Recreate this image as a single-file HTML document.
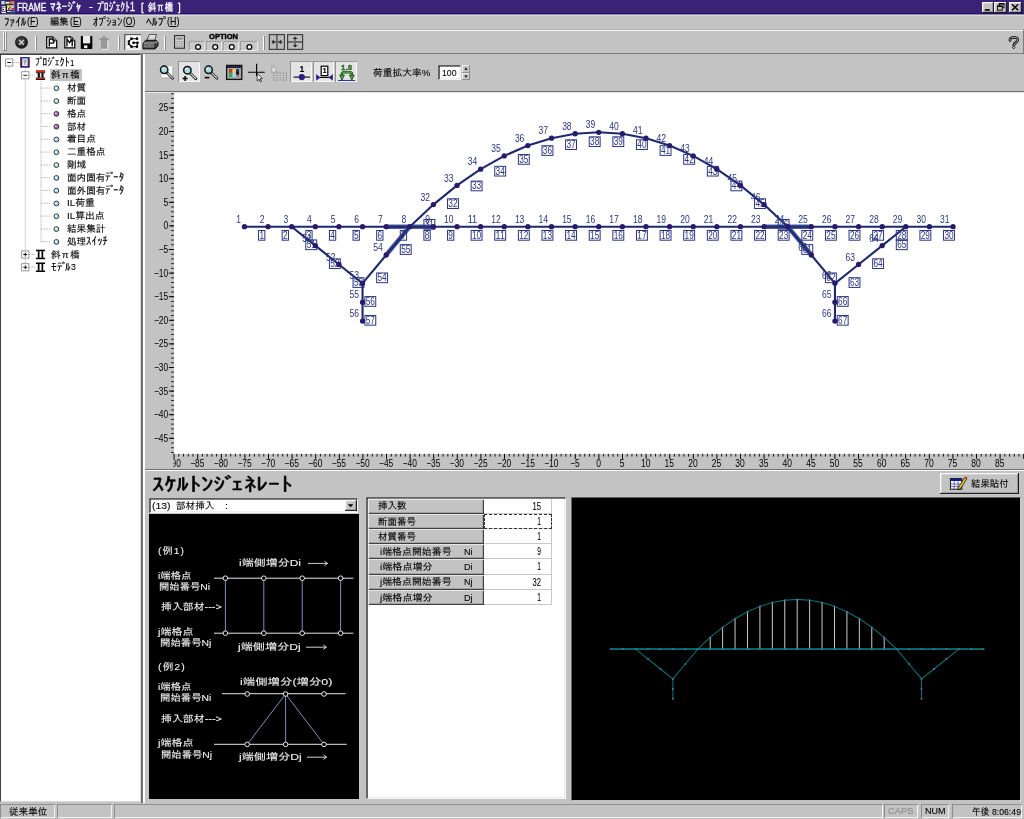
<!DOCTYPE html>
<html lang="ja"><head><meta charset="utf-8"><title>FRAME ﾏﾈｰｼﾞｬ - ﾌﾟﾛｼﾞｪｸﾄ1 [ 斜π橋 ]</title>
<style>
html,body{margin:0;padding:0;}
body{width:1024px;height:819px;overflow:hidden;background:#c3c3c3;position:relative;font-family:"Liberation Sans","IPAGothic","Noto Sans CJK JP",sans-serif;}
#app{will-change:transform;position:absolute;left:0;top:0;width:1024px;height:819px;overflow:hidden;background:#c3c3c3;}
#app div,#app svg,#app span.t{position:absolute;}
#app div{box-sizing:border-box;}
.t{white-space:nowrap;display:inline-block;-webkit-text-stroke:0.1px currentColor;}
svg text{font-family:"Liberation Sans","IPAGothic","Noto Sans CJK JP",sans-serif;}
u{text-decoration:underline;text-underline-offset:1px;}
</style></head><body><div id="app">

<!-- title bar -->
<div style="left:0.00px;top:0.00px;width:1024.00px;height:13.90px;background:#3a2376;"></div>
<div style="left:0.00px;top:12.80px;width:1024.00px;height:1.10px;background:#26126c;"></div>
<div style="left:0.00px;top:13.90px;width:1024.00px;height:1.10px;background:#8c8ca8;"></div>
<div style="left:0.00px;top:15.00px;width:1024.00px;height:1.00px;background:#dadada;"></div>
<svg style="left:0px;top:0px;" width="16" height="15" viewBox="0 0 16 15">
<rect x="1.6" y="1" width="12.6" height="12.2" fill="#f4f4f4"/><rect x="1.6" y="1" width="3" height="2.4" fill="#a8e4f0"/><rect x="5" y="1.4" width="5" height="2.6" fill="#fff" stroke="#000" stroke-width="0.7"/><rect x="10.2" y="1" width="3.4" height="4" fill="#d02828"/><rect x="11" y="1.6" width="1.4" height="1.2" fill="#f0e020"/><rect x="12" y="3.2" width="1.4" height="1.2" fill="#f0e020"/><rect x="1.6" y="4.4" width="12.4" height="0.9" fill="#000"/><rect x="2" y="5.6" width="4" height="5.6" fill="#fff" stroke="#000" stroke-width="0.7"/><rect x="3" y="6.8" width="1" height="1" fill="#2030c0"/><rect x="4.6" y="6.8" width="1" height="1" fill="#2030c0"/><rect x="3" y="9" width="1" height="1" fill="#000"/><rect x="7" y="6" width="3" height="2" fill="#f0e020"/><rect x="9" y="6.4" width="2.4" height="1.6" fill="#30a838"/><rect x="11.4" y="6" width="2.6" height="2" fill="#c8c8c8"/><rect x="8" y="8" width="6" height="1.8" fill="#d02828"/><rect x="10" y="8.4" width="1.6" height="1" fill="#fff"/><rect x="6.4" y="10" width="7.6" height="1.4" fill="#2030c0"/><rect x="7.4" y="11.2" width="5" height="1" fill="#fff"/><rect x="6" y="12.2" width="8" height="1" fill="#000"/><rect x="10.6" y="11" width="2.6" height="1.4" fill="#108070"/><rect x="6" y="5.4" width="0.9" height="7.4" fill="#000"/>
</svg>
<span class="t" id="t0" style="left:16.60px;top:0.70px;font-size:10.8px;line-height:13.39px;color:#fff;font-weight:normal;transform:scaleX(0.7752);transform-origin:0 50%;-webkit-text-stroke:0.3px #fff;">FRAME</span>
<span class="t" id="t1" style="left:49.80px;top:-0.34px;font-size:12px;line-height:14.88px;color:#fff;font-weight:normal;transform:scaleX(0.9554);transform-origin:0 50%;-webkit-text-stroke:0.3px #fff;">ﾏﾈｰｼ<span style="margin-left:-0.08em;margin-right:-0.2em">ﾞ</span>ｬ</span>
<span class="t" id="t2" style="left:88.90px;top:-0.40px;font-size:10.8px;line-height:13.39px;color:#fff;font-weight:normal;transform:scaleX(1.0805);transform-origin:0 50%;-webkit-text-stroke:0.3px #fff;">-</span>
<span class="t" id="t3" style="left:96.70px;top:-0.34px;font-size:12px;line-height:14.88px;color:#fff;font-weight:normal;transform:scaleX(0.7938);transform-origin:0 50%;-webkit-text-stroke:0.3px #fff;">ﾌ<span style="margin-left:-0.08em;margin-right:-0.2em">ﾟ</span>ﾛｼ<span style="margin-left:-0.08em;margin-right:-0.2em">ﾞ</span>ｪｸﾄ1</span>
<span class="t" id="t4" style="left:141.00px;top:0.70px;font-size:10.8px;line-height:13.39px;color:#fff;font-weight:normal;transform:scaleX(0.8667);transform-origin:0 50%;-webkit-text-stroke:0.3px #fff;">[</span>
<span class="t" id="t5" style="left:147.90px;top:0.70px;font-size:10.8px;line-height:13.39px;color:#fff;font-weight:normal;transform:scaleX(0.7718);transform-origin:0 50%;-webkit-text-stroke:0.3px #fff;">斜<span style="display:inline-block;width:1em;text-align:center">π</span>橋</span>
<span class="t" id="t6" style="left:178.00px;top:0.70px;font-size:10.8px;line-height:13.39px;color:#fff;font-weight:normal;transform:scaleX(0.9000);transform-origin:0 50%;-webkit-text-stroke:0.3px #fff;">]</span>
<div style="left:981.60px;top:1.80px;width:12.80px;height:11.20px;background:#c3c3c3;box-shadow:inset -0.8px -0.8px 0 #000,inset 0.8px 0.8px 0 #fff,inset -1.6px -1.6px 0 #808080,inset 1.6px 1.6px 0 #dfdfdf;"></div>
<div style="left:994.40px;top:1.80px;width:12.80px;height:11.20px;background:#c3c3c3;box-shadow:inset -0.8px -0.8px 0 #000,inset 0.8px 0.8px 0 #fff,inset -1.6px -1.6px 0 #808080,inset 1.6px 1.6px 0 #dfdfdf;"></div>
<div style="left:1008.80px;top:1.80px;width:12.80px;height:11.20px;background:#c3c3c3;box-shadow:inset -0.8px -0.8px 0 #000,inset 0.8px 0.8px 0 #fff,inset -1.6px -1.6px 0 #808080,inset 1.6px 1.6px 0 #dfdfdf;"></div>
<svg style="left:980px;top:0px;" width="44" height="15" viewBox="980 0 44 15">
<rect x="984.8" y="9.2" width="5" height="1.6" fill="#000"/>
<rect x="999.2" y="3.6" width="4.8" height="4.2" fill="none" stroke="#000" stroke-width="0.9"/><rect x="998.8" y="3.2" width="5.6" height="1.3" fill="#000"/><rect x="997.4" y="6" width="4.8" height="4.2" fill="#c3c3c3" stroke="#000" stroke-width="0.9"/><rect x="997" y="5.6" width="5.6" height="1.3" fill="#000"/>
<path d="M1012 4.2 L1018.2 10.2 M1018.2 4.2 L1012 10.2" stroke="#000" stroke-width="1.5" fill="none"/>
</svg>
<!-- menu bar -->
<span class="t" id="t7" style="left:4.20px;top:14.81px;font-size:11.6px;line-height:14.38px;color:#000;font-weight:normal;transform:scaleX(0.9660);transform-origin:0 50%;">ﾌｧｲﾙ</span>
<span class="t" id="t8" style="left:27.10px;top:15.85px;font-size:10.4px;line-height:12.90px;color:#000;font-weight:normal;transform:scaleX(0.8724);transform-origin:0 50%;">(<u>F</u>)</span>
<span class="t" id="t9" style="left:50.20px;top:16.35px;font-size:9.6px;line-height:11.90px;color:#000;font-weight:normal;transform:scaleX(0.9590);transform-origin:0 50%;">編集</span>
<span class="t" id="t10" style="left:69.60px;top:15.85px;font-size:10.4px;line-height:12.90px;color:#000;font-weight:normal;transform:scaleX(0.8360);transform-origin:0 50%;">(<u>E</u>)</span>
<span class="t" id="t11" style="left:92.90px;top:14.81px;font-size:11.6px;line-height:14.38px;color:#000;font-weight:normal;transform:scaleX(0.9319);transform-origin:0 50%;">ｵﾌ<span style="margin-left:-0.08em;margin-right:-0.2em">ﾟ</span>ｼｮﾝ</span>
<span class="t" id="t12" style="left:122.60px;top:15.85px;font-size:10.4px;line-height:12.90px;color:#000;font-weight:normal;transform:scaleX(0.8249);transform-origin:0 50%;">(<u>O</u>)</span>
<span class="t" id="t13" style="left:146.20px;top:14.81px;font-size:11.6px;line-height:14.38px;color:#000;font-weight:normal;transform:scaleX(1.0124);transform-origin:0 50%;">ﾍﾙﾌ<span style="margin-left:-0.08em;margin-right:-0.2em">ﾟ</span></span>
<span class="t" id="t14" style="left:166.60px;top:15.85px;font-size:10.4px;line-height:12.90px;color:#000;font-weight:normal;transform:scaleX(0.8579);transform-origin:0 50%;">(<u>H</u>)</span>
<!-- toolbar -->
<div style="left:0.00px;top:29.00px;width:1024.00px;height:0.80px;background:#b0b0b0;"></div>
<div style="left:0.00px;top:29.80px;width:1024.00px;height:1.10px;background:#f4f4f4;"></div>
<div style="left:0.00px;top:52.80px;width:1023.40px;height:1.00px;background:#7c7c7c;"></div>
<div style="left:1022.50px;top:30.00px;width:1.00px;height:23.60px;background:#7c7c7c;"></div>
<div style="left:2.60px;top:32.40px;width:2.20px;height:19.00px;box-shadow:inset -0.8px -0.8px 0 #808080,inset 0.8px 0.8px 0 #fff;"></div>
<div style="left:5.20px;top:32.40px;width:2.20px;height:19.00px;box-shadow:inset -0.8px -0.8px 0 #808080,inset 0.8px 0.8px 0 #fff;"></div>
<div style="left:35.20px;top:36.00px;width:1.00px;height:14.40px;background:#fff;"></div>
<div style="left:36.20px;top:36.00px;width:1.00px;height:14.40px;background:#8a8a8a;"></div>
<div style="left:118.20px;top:36.00px;width:1.00px;height:14.40px;background:#fff;"></div>
<div style="left:119.20px;top:36.00px;width:1.00px;height:14.40px;background:#8a8a8a;"></div>
<div style="left:164.40px;top:36.00px;width:1.00px;height:14.40px;background:#fff;"></div>
<div style="left:165.40px;top:36.00px;width:1.00px;height:14.40px;background:#8a8a8a;"></div>
<div style="left:262.80px;top:36.00px;width:1.00px;height:14.40px;background:#fff;"></div>
<div style="left:263.80px;top:36.00px;width:1.00px;height:14.40px;background:#8a8a8a;"></div>
<div style="left:124.20px;top:33.60px;width:16.80px;height:16.30px;background:#d8d8d8;box-shadow:inset 1.2px 1.2px 0 #606060,inset -0.8px -0.8px 0 #fff;"></div>
<div style="left:1000.00px;top:33.00px;width:20.00px;height:19.00px;"></div>
<svg style="left:0px;top:31px;" width="1024" height="22" viewBox="0 31 1024 22">
<circle cx="21.5" cy="42.3" r="6.4" fill="#1c1c1c"/><circle cx="21" cy="41.6" r="4.6" fill="#3c3c3c"/><path d="M19.2 40 L23.8 44.6 M23.8 40 L19.2 44.6" stroke="#d0d0d0" stroke-width="1.5"/>
<path d="M46.7 36.9 H52.7 L56.7 40.8 V47.9 H46.7 Z" fill="#fff" stroke="#000" stroke-width="1.2" stroke-linejoin="miter"/><path d="M52.7 36.9 V40.8 H56.7" fill="#fff" stroke="#000" stroke-width="0.8"/>
<path d="M49.300000000000004 46.6 V39 H52.1 Q54.1 39 54.1 41 Q54.1 43.2 52.1 43.2 H49.300000000000004" fill="none" stroke="#000" stroke-width="1.3"/>
<path d="M64.8 36.9 H70.8 L74.8 40.8 V47.9 H64.8 Z" fill="#fff" stroke="#000" stroke-width="1.2" stroke-linejoin="miter"/><path d="M70.8 36.9 V40.8 H74.8" fill="#fff" stroke="#000" stroke-width="0.8"/>
<path d="M67.0 46.6 V39 L69.60000000000001 42.6 L72.2 39 V46.6" fill="none" stroke="#000" stroke-width="1.3"/>
<rect x="80.8" y="36" width="11.5" height="12.9" fill="#000"/><rect x="83" y="36" width="7.2" height="7.4" fill="#ececec"/><rect x="83.4" y="44.8" width="6.4" height="4.1" fill="#000"/><rect x="84" y="45.4" width="3.4" height="2.8" fill="#f0f0f0"/>
<path d="M101.2 39.4 H107 V48.6 H101.2 Z" fill="#8c8c8c"/><path d="M99.6 39 H108.6" stroke="#8c8c8c" stroke-width="1.6"/><path d="M102.4 37 H105.8" stroke="#8c8c8c" stroke-width="1.4"/><path d="M102.6 40.6 V47.6 M104.1 40.6 V47.6 M105.6 40.6 V47.6" stroke="#c4c4c4" stroke-width="0.7" stroke-dasharray="1 0.8"/><path d="M108 40.4 V49.4 H102" stroke="#f4f4f4" stroke-width="0.8" fill="none"/>
<rect x="126.6" y="35.4" width="13.8" height="13" fill="#fff"/><path d="M137 38.7 H131.5 L128.8 41.4 V44 L131.5 46.7 H137 L137.5 42.8 H133.6" stroke="#000" stroke-width="1.1" fill="none"/><g fill="#000"><circle cx="131.5" cy="38.7" r="1.35"/><circle cx="137" cy="38.7" r="1.35"/><circle cx="128.8" cy="41.4" r="1.2"/><circle cx="128.8" cy="44" r="1.2"/><circle cx="133.6" cy="42.8" r="1.35"/><circle cx="137.5" cy="42.8" r="1.35"/><circle cx="131.5" cy="46.7" r="1.35"/><circle cx="137" cy="46.7" r="1.35"/></g>
<path d="M146.6 40.6 L149.4 34.6 H156.4 L154.6 40.6 Z" fill="#f8f8f8" stroke="#222" stroke-width="0.8"/><path d="M148.8 37 H154.6 M148.2 38.6 H154" stroke="#9a9a9a" stroke-width="0.6"/><path d="M143 43 L146 40.2 H155.8 L158 41.8 V45.8 L155 48.9 H143 Z" fill="#4a4a4a" stroke="#000" stroke-width="0.9"/><path d="M143.4 43 H155 L157.8 41.6" fill="none" stroke="#d8d8d8" stroke-width="0.8"/><path d="M143.6 45 H154.8 M143.6 46.8 H154.8" stroke="#a8a8a8" stroke-width="0.8"/><path d="M155 43 V48.8" stroke="#000" stroke-width="0.8"/>
<rect x="174.6" y="35.6" width="9.8" height="12.6" fill="#d4d4d4" stroke="#282828" stroke-width="1.1"/><rect x="176.4" y="37.6" width="6.2" height="2" fill="#8c8c8c"/><g fill="#909090"><rect x="176.4" y="41" width="1.5" height="1.3"/><rect x="178.8" y="41" width="1.5" height="1.3"/><rect x="181.1" y="41" width="1.5" height="1.3"/><rect x="176.4" y="43.2" width="1.5" height="1.3"/><rect x="178.8" y="43.2" width="1.5" height="1.3"/><rect x="181.1" y="43.2" width="1.5" height="1.3"/><rect x="176.4" y="45.4" width="1.5" height="1.3"/><rect x="178.8" y="45.4" width="1.5" height="1.3"/><rect x="181.1" y="45.4" width="1.5" height="1.3"/></g>
<rect x="189.20" y="41.4" width="15.6" height="9" fill="#c9c9c9"/><path d="M189.20 50.4 V41.4 H204.80" fill="none" stroke="#6c6c6c" stroke-width="0.9" stroke-dasharray="0.9 0.7"/><path d="M204.80 41.4 V50.4 H189.20" fill="none" stroke="#f0f0f0" stroke-width="0.9"/><circle cx="198.10" cy="47" r="2.4" fill="#fff" stroke="#000" stroke-width="1.25"/>
<rect x="206.40" y="41.4" width="15.2" height="9" fill="#c9c9c9"/><path d="M206.40 50.4 V41.4 H221.60" fill="none" stroke="#6c6c6c" stroke-width="0.9" stroke-dasharray="0.9 0.7"/><path d="M221.60 41.4 V50.4 H206.40" fill="none" stroke="#f0f0f0" stroke-width="0.9"/><circle cx="215.20" cy="47" r="2.4" fill="#fff" stroke="#000" stroke-width="1.25"/>
<rect x="223.20" y="41.4" width="15.4" height="9" fill="#c9c9c9"/><path d="M223.20 50.4 V41.4 H238.60" fill="none" stroke="#6c6c6c" stroke-width="0.9" stroke-dasharray="0.9 0.7"/><path d="M238.60 41.4 V50.4 H223.20" fill="none" stroke="#f0f0f0" stroke-width="0.9"/><circle cx="231.80" cy="47" r="2.4" fill="#fff" stroke="#000" stroke-width="1.25"/>
<rect x="240.40" y="41.4" width="17.2" height="9" fill="#c9c9c9"/><path d="M240.40 50.4 V41.4 H257.60" fill="none" stroke="#6c6c6c" stroke-width="0.9" stroke-dasharray="0.9 0.7"/><path d="M257.60 41.4 V50.4 H240.40" fill="none" stroke="#f0f0f0" stroke-width="0.9"/><circle cx="249.40" cy="47" r="2.4" fill="#fff" stroke="#000" stroke-width="1.25"/>
<rect x="269.4" y="34.6" width="15" height="14.8" fill="#bcbcbc" stroke="#404040" stroke-width="1.2"/>
<path d="M276.9 34.8 V49.2" stroke="#404040" stroke-width="1.3"/><path d="M275.7 42 H272.29999999999995 M278.09999999999997 42 H281.5" stroke="#303030" stroke-width="1.3"/><path d="M271.29999999999995 42 L273.9 39.4 V44.6 Z M282.5 42 L279.9 39.4 V44.6 Z" fill="#303030"/>
<rect x="287.6" y="34.6" width="15" height="14.8" fill="#bcbcbc" stroke="#404040" stroke-width="1.2"/>
<path d="M288.0 42 H302.20000000000005" stroke="#404040" stroke-width="1.3"/><path d="M295.1 40.8 V37.4 M295.1 43.2 V46.6" stroke="#303030" stroke-width="1.3"/><path d="M295.1 36.4 L292.5 39 H297.70000000000005 Z M295.1 47.6 L292.5 45 H297.70000000000005 Z" fill="#303030"/>
<path d="M1010 40.4 C1009.8 36.6 1017.8 36.2 1017.8 39.8 C1017.8 42 1014.2 42.6 1013.7 45.2" fill="none" stroke="#111" stroke-width="2.7" stroke-linecap="round"/><path d="M1010 40.4 C1009.8 36.6 1017.8 36.2 1017.8 39.8 C1017.8 42 1014.2 42.6 1013.7 45.2" fill="none" stroke="#d0d0d0" stroke-width="0.9" stroke-linecap="round"/><path d="M1013.7 46 L1015 47.4 L1013.7 48.9 L1012.4 47.4 Z" fill="#d0d0d0" stroke="#111" stroke-width="0.9"/>
</svg>
<span class="t" id="t15" style="left:208.70px;top:32.26px;font-size:7.8px;line-height:9.67px;color:#000;font-weight:bold;transform:scaleX(0.9702);transform-origin:0 50%;-webkit-text-stroke:0.45px #000;">OPTION</span>
<!-- tree -->
<div style="left:0.00px;top:54.40px;width:141.00px;height:747.60px;background:#fff;border-left:1.6px solid #404040;border-top:1.6px solid #404040;border-right:1.6px solid #d8d8d8;border-bottom:1.2px solid #d8d8d8;"></div>
<div style="left:141.20px;top:54.00px;width:1.60px;height:749.00px;background:#707070;"></div>
<div style="left:143.00px;top:54.00px;width:2.20px;height:749.00px;background:#fff;"></div>
<svg style="left:0px;top:56px;" width="140" height="230" viewBox="0 56 140 230">
<path d="M13 62.5 H20" stroke="#909090" stroke-width="0.8" stroke-dasharray="0.8 0.8"/>
<path d="M9.2 66.5 V69.5" stroke="#909090" stroke-width="0.8" stroke-dasharray="0.8 0.8"/>
<path d="M25.3 68.5 V267.3" stroke="#909090" stroke-width="0.8" stroke-dasharray="0.8 0.8"/>
<path d="M29 75.3 H35" stroke="#909090" stroke-width="0.8" stroke-dasharray="0.8 0.8"/>
<path d="M41 81.3 V241.70000000000002" stroke="#909090" stroke-width="0.8" stroke-dasharray="0.8 0.8"/>
<path d="M41 88.1 H50.5" stroke="#909090" stroke-width="0.8" stroke-dasharray="0.8 0.8"/>
<path d="M41 100.9 H50.5" stroke="#909090" stroke-width="0.8" stroke-dasharray="0.8 0.8"/>
<path d="M41 113.7 H50.5" stroke="#909090" stroke-width="0.8" stroke-dasharray="0.8 0.8"/>
<path d="M41 126.5 H50.5" stroke="#909090" stroke-width="0.8" stroke-dasharray="0.8 0.8"/>
<path d="M41 139.3 H50.5" stroke="#909090" stroke-width="0.8" stroke-dasharray="0.8 0.8"/>
<path d="M41 152.10000000000002 H50.5" stroke="#909090" stroke-width="0.8" stroke-dasharray="0.8 0.8"/>
<path d="M41 164.9 H50.5" stroke="#909090" stroke-width="0.8" stroke-dasharray="0.8 0.8"/>
<path d="M41 177.7 H50.5" stroke="#909090" stroke-width="0.8" stroke-dasharray="0.8 0.8"/>
<path d="M41 190.5 H50.5" stroke="#909090" stroke-width="0.8" stroke-dasharray="0.8 0.8"/>
<path d="M41 203.3 H50.5" stroke="#909090" stroke-width="0.8" stroke-dasharray="0.8 0.8"/>
<path d="M41 216.10000000000002 H50.5" stroke="#909090" stroke-width="0.8" stroke-dasharray="0.8 0.8"/>
<path d="M41 228.9 H50.5" stroke="#909090" stroke-width="0.8" stroke-dasharray="0.8 0.8"/>
<path d="M41 241.70000000000002 H50.5" stroke="#909090" stroke-width="0.8" stroke-dasharray="0.8 0.8"/>
<path d="M29 254.5 H35" stroke="#909090" stroke-width="0.8" stroke-dasharray="0.8 0.8"/>
<path d="M29 267.3 H35" stroke="#909090" stroke-width="0.8" stroke-dasharray="0.8 0.8"/>
<rect x="5.6" y="58.9" width="7.2" height="7.2" fill="#fff" stroke="#808080" stroke-width="0.8"/><path d="M7.199999999999999 62.5 H11.2" stroke="#000" stroke-width="0.9"/>
<rect x="21.7" y="71.7" width="7.2" height="7.2" fill="#fff" stroke="#808080" stroke-width="0.8"/><path d="M23.3 75.3 H27.3" stroke="#000" stroke-width="0.9"/>
<rect x="21.7" y="250.9" width="7.2" height="7.2" fill="#fff" stroke="#808080" stroke-width="0.8"/><path d="M23.3 254.5 H27.3" stroke="#000" stroke-width="0.9"/>
<path d="M25.3 252.5 V256.5" stroke="#000" stroke-width="0.9"/>
<rect x="21.7" y="263.7" width="7.2" height="7.2" fill="#fff" stroke="#808080" stroke-width="0.8"/><path d="M23.3 267.3 H27.3" stroke="#000" stroke-width="0.9"/>
<path d="M25.3 265.3 V269.3" stroke="#000" stroke-width="0.9"/>
<rect x="20.2" y="57.1" width="9.5" height="10.6" fill="#18187c"/><path d="M20.9 57.8 V67.0 M29 57.8 V67.0" stroke="#d03020" stroke-width="1.1" stroke-dasharray="1.2 1"/><rect x="22.2" y="58.5" width="5.5" height="7.6" fill="#ececec"/><rect x="22.2" y="58.5" width="5.5" height="1.6" fill="#9ad8e8"/><path d="M23.4 61.0 H26.6 M25 61.0 V64.8" stroke="#707070" stroke-width="0.9"/>
<rect x="35.9" y="70.1" width="9.2" height="2.4" fill="#c83020"/><rect x="35.9" y="72.39999999999999" width="9.2" height="0.8" fill="#000"/><rect x="35.9" y="77.3" width="9.2" height="1.9" fill="#c83020"/><rect x="35.9" y="79.1" width="9.2" height="0.9" fill="#000"/><rect x="37.7" y="72.89999999999999" width="2.2" height="4.8" fill="#000"/><rect x="41.3" y="72.89999999999999" width="2.2" height="4.8" fill="#000"/><rect x="39.9" y="73.2" width="1.4" height="4.1" fill="#e8d0c0"/>
<rect x="35.9" y="249.7" width="9.2" height="1.5" fill="#000"/><rect x="35.9" y="257.7" width="9.2" height="1.5" fill="#000"/><rect x="37.8" y="251.1" width="1.7" height="6.8" fill="#000"/><rect x="41.5" y="251.1" width="1.7" height="6.8" fill="#000"/>
<rect x="35.9" y="262.5" width="9.2" height="1.5" fill="#000"/><rect x="35.9" y="270.5" width="9.2" height="1.5" fill="#000"/><rect x="37.8" y="263.90000000000003" width="1.7" height="6.8" fill="#000"/><rect x="41.5" y="263.90000000000003" width="1.7" height="6.8" fill="#000"/>
<circle cx="56.4" cy="88.3" r="2.4" fill="#b4e6ee" stroke="#303040" stroke-width="1"/><circle cx="55.7" cy="87.6" r="0.8" fill="#fff" opacity="0.9"/>
<circle cx="56.4" cy="101.10000000000001" r="2.4" fill="#b4e6ee" stroke="#303040" stroke-width="1"/><circle cx="55.7" cy="100.4" r="0.8" fill="#fff" opacity="0.9"/>
<circle cx="56.4" cy="113.9" r="2.4" fill="#a070a0" stroke="#303040" stroke-width="1"/><circle cx="55.7" cy="113.2" r="0.8" fill="#fff" opacity="0.9"/>
<circle cx="56.4" cy="126.7" r="2.4" fill="#a070a0" stroke="#303040" stroke-width="1"/><circle cx="55.7" cy="126.0" r="0.8" fill="#fff" opacity="0.9"/>
<circle cx="56.4" cy="139.5" r="2.4" fill="#b4e6ee" stroke="#303040" stroke-width="1"/><circle cx="55.7" cy="138.8" r="0.8" fill="#fff" opacity="0.9"/>
<circle cx="56.4" cy="152.3" r="2.4" fill="#b4e6ee" stroke="#303040" stroke-width="1"/><circle cx="55.7" cy="151.60000000000002" r="0.8" fill="#fff" opacity="0.9"/>
<circle cx="56.4" cy="165.1" r="2.4" fill="#b4e6ee" stroke="#303040" stroke-width="1"/><circle cx="55.7" cy="164.4" r="0.8" fill="#fff" opacity="0.9"/>
<circle cx="56.4" cy="177.89999999999998" r="2.4" fill="#b4e6ee" stroke="#303040" stroke-width="1"/><circle cx="55.7" cy="177.2" r="0.8" fill="#fff" opacity="0.9"/>
<circle cx="56.4" cy="190.7" r="2.4" fill="#b4e6ee" stroke="#303040" stroke-width="1"/><circle cx="55.7" cy="190.0" r="0.8" fill="#fff" opacity="0.9"/>
<circle cx="56.4" cy="203.5" r="2.4" fill="#b4e6ee" stroke="#303040" stroke-width="1"/><circle cx="55.7" cy="202.8" r="0.8" fill="#fff" opacity="0.9"/>
<circle cx="56.4" cy="216.3" r="2.4" fill="#b4e6ee" stroke="#303040" stroke-width="1"/><circle cx="55.7" cy="215.60000000000002" r="0.8" fill="#fff" opacity="0.9"/>
<circle cx="56.4" cy="229.1" r="2.4" fill="#b4e6ee" stroke="#303040" stroke-width="1"/><circle cx="55.7" cy="228.4" r="0.8" fill="#fff" opacity="0.9"/>
<circle cx="56.4" cy="241.9" r="2.4" fill="#b4e6ee" stroke="#303040" stroke-width="1"/><circle cx="55.7" cy="241.20000000000002" r="0.8" fill="#fff" opacity="0.9"/>
</svg>
<div style="left:49.90px;top:69.30px;width:31.90px;height:11.60px;background:#c3c3c3;"></div>
<span class="t" id="t16" style="left:35.30px;top:55.13px;font-size:11.4px;line-height:14.14px;color:#000;font-weight:normal;transform:scaleX(0.8815);transform-origin:0 50%;">ﾌ<span style="margin-left:-0.08em;margin-right:-0.2em">ﾟ</span>ﾛｼ<span style="margin-left:-0.08em;margin-right:-0.2em">ﾞ</span>ｪｸﾄ</span>
<span class="t" id="t17" style="left:70.00px;top:56.55px;font-size:9.6px;line-height:11.90px;color:#000;font-weight:normal;transform:scaleX(0.8234);transform-origin:0 50%;">1</span>
<span class="t" id="t18" style="left:51.20px;top:69.35px;font-size:9.6px;line-height:11.90px;color:#000;font-weight:normal;transform:scaleX(1.0007);transform-origin:0 50%;">斜<span style="display:inline-block;width:1em;text-align:center">π</span>橋</span>
<span class="t" id="t19" style="left:66.70px;top:82.15px;font-size:9.6px;line-height:11.90px;color:#000;font-weight:normal;transform:scaleX(1.0007);transform-origin:0 50%;">材質</span>
<span class="t" id="t20" style="left:66.70px;top:94.95px;font-size:9.6px;line-height:11.90px;color:#000;font-weight:normal;transform:scaleX(1.0007);transform-origin:0 50%;">断面</span>
<span class="t" id="t21" style="left:66.70px;top:107.75px;font-size:9.6px;line-height:11.90px;color:#000;font-weight:normal;transform:scaleX(1.0007);transform-origin:0 50%;">格点</span>
<span class="t" id="t22" style="left:66.70px;top:120.55px;font-size:9.6px;line-height:11.90px;color:#000;font-weight:normal;transform:scaleX(1.0007);transform-origin:0 50%;">部材</span>
<span class="t" id="t23" style="left:66.70px;top:133.35px;font-size:9.6px;line-height:11.90px;color:#000;font-weight:normal;transform:scaleX(1.0007);transform-origin:0 50%;">着目点</span>
<span class="t" id="t24" style="left:66.70px;top:146.15px;font-size:9.6px;line-height:11.90px;color:#000;font-weight:normal;transform:scaleX(1.0007);transform-origin:0 50%;">二重格点</span>
<span class="t" id="t25" style="left:66.70px;top:158.95px;font-size:9.6px;line-height:11.90px;color:#000;font-weight:normal;transform:scaleX(1.0007);transform-origin:0 50%;">剛域</span>
<span class="t" id="t26" style="left:66.70px;top:171.75px;font-size:9.6px;line-height:11.90px;color:#000;font-weight:normal;transform:scaleX(1.0007);transform-origin:0 50%;">面内固有</span>
<span class="t" id="t27" style="left:105.10px;top:170.33px;font-size:11.4px;line-height:14.14px;color:#000;font-weight:normal;transform:scaleX(0.9783);transform-origin:0 50%;">ﾃ<span style="margin-left:-0.08em;margin-right:-0.2em">ﾞ</span>ｰﾀ</span>
<span class="t" id="t28" style="left:66.70px;top:184.55px;font-size:9.6px;line-height:11.90px;color:#000;font-weight:normal;transform:scaleX(1.0007);transform-origin:0 50%;">面外固有</span>
<span class="t" id="t29" style="left:105.10px;top:183.13px;font-size:11.4px;line-height:14.14px;color:#000;font-weight:normal;transform:scaleX(0.9783);transform-origin:0 50%;">ﾃ<span style="margin-left:-0.08em;margin-right:-0.2em">ﾞ</span>ｰﾀ</span>
<span class="t" id="t30" style="left:66.70px;top:197.35px;font-size:9.6px;line-height:11.90px;color:#000;font-weight:normal;transform:scaleX(1.0293);transform-origin:0 50%;">IL荷重</span>
<span class="t" id="t31" style="left:66.70px;top:210.15px;font-size:9.6px;line-height:11.90px;color:#000;font-weight:normal;transform:scaleX(1.0218);transform-origin:0 50%;">IL算出点</span>
<span class="t" id="t32" style="left:66.70px;top:222.95px;font-size:9.6px;line-height:11.90px;color:#000;font-weight:normal;transform:scaleX(1.0007);transform-origin:0 50%;">結果集計</span>
<span class="t" id="t33" style="left:66.70px;top:235.75px;font-size:9.6px;line-height:11.90px;color:#000;font-weight:normal;transform:scaleX(1.0007);transform-origin:0 50%;">処理</span>
<span class="t" id="t34" style="left:85.90px;top:234.33px;font-size:11.4px;line-height:14.14px;color:#000;font-weight:normal;transform:scaleX(0.9569);transform-origin:0 50%;">ｽｲｯﾁ</span>
<span class="t" id="t35" style="left:51.20px;top:248.55px;font-size:9.6px;line-height:11.90px;color:#000;font-weight:normal;transform:scaleX(1.0007);transform-origin:0 50%;">斜<span style="display:inline-block;width:1em;text-align:center">π</span>橋</span>
<span class="t" id="t36" style="left:51.20px;top:259.93px;font-size:11.4px;line-height:14.14px;color:#000;font-weight:normal;transform:scaleX(0.9987);transform-origin:0 50%;">ﾓﾃ<span style="margin-left:-0.08em;margin-right:-0.2em">ﾞ</span>ﾙ</span>
<span class="t" id="t37" style="left:71.00px;top:261.35px;font-size:9.6px;line-height:11.90px;color:#000;font-weight:normal;transform:scaleX(0.8982);transform-origin:0 50%;">3</span>
<!-- chart panel -->
<div style="left:178.10px;top:61.20px;width:22.20px;height:21.00px;background:#e4e4e4;box-shadow:inset 0.8px 0.8px 0 #808080,inset -0.8px -0.8px 0 #fff;"></div>
<div style="left:290.30px;top:61.20px;width:21.90px;height:21.00px;background:#e4e4e4;box-shadow:inset 0.8px 0.8px 0 #808080,inset -0.8px -0.8px 0 #fff;"></div>
<div style="left:313.00px;top:61.20px;width:21.20px;height:21.00px;background:#e4e4e4;box-shadow:inset 0.8px 0.8px 0 #808080,inset -0.8px -0.8px 0 #fff;"></div>
<div style="left:335.00px;top:61.20px;width:22.30px;height:21.00px;background:#e4e4e4;box-shadow:inset 0.8px 0.8px 0 #808080,inset -0.8px -0.8px 0 #fff;"></div>
<div style="left:145.00px;top:91.00px;width:879.00px;height:1.00px;background:#707070;"></div>
<div style="left:145.00px;top:92.00px;width:879.00px;height:1.00px;background:#e8e8e8;"></div>
<div style="left:173.60px;top:92.80px;width:850.40px;height:361.00px;background:#fff;"></div>
<div style="left:145.00px;top:469.00px;width:879.00px;height:1.40px;background:#707070;"></div>
<div style="left:145.00px;top:470.40px;width:879.00px;height:1.00px;background:#fff;"></div>
<span class="t" id="t38" style="left:373.40px;top:66.65px;font-size:9.6px;line-height:11.90px;color:#000;font-weight:normal;transform:scaleX(1.0159);transform-origin:0 50%;">荷重拡大率%</span>
<div style="left:437.80px;top:64.80px;width:23.00px;height:15.60px;background:#fff;box-shadow:inset 0.8px 0.8px 0 #808080,inset -0.8px -0.8px 0 #fff,inset 1.6px 1.6px 0 #000,inset -1.6px -1.6px 0 #dfdfdf;"></div>
<span class="t" id="t39" style="left:441.60px;top:66.85px;font-size:9.6px;line-height:11.90px;color:#000;font-weight:normal;transform:scaleX(0.9116);transform-origin:0 50%;">100</span>
<div style="left:461.60px;top:65.00px;width:8.80px;height:7.60px;box-shadow:inset -0.8px -0.8px 0 #808080,inset 0.8px 0.8px 0 #fff;background:#c3c3c3;"></div>
<div style="left:461.60px;top:72.80px;width:8.80px;height:7.60px;box-shadow:inset -0.8px -0.8px 0 #808080,inset 0.8px 0.8px 0 #fff;background:#c3c3c3;"></div>
<svg style="left:145px;top:56px;" width="400" height="34" viewBox="145 56 400 34">
<rect x="161.8" y="66.4" width="10.8" height="11.2" fill="#fff"/><path d="M162.2 78 H172.8 V67" stroke="#a0a0a0" stroke-width="0.7" fill="none"/>
<path d="M167.0 72.8 L172.6 78.39999999999999" stroke="#181818" stroke-width="2.7" stroke-linecap="round"/><path d="M167.6 73.2 L172.39999999999998 78.1" stroke="#e8e8e8" stroke-width="1.1" stroke-linecap="round"/><circle cx="164.2" cy="69.8" r="3.7" fill="#a4dce2" stroke="#101010" stroke-width="1.5"/><path d="M162.2 69.39999999999999 A2.2 2.2 0 0 1 164.0 67.6" stroke="#f4ffff" stroke-width="0.9" fill="none"/>
<path d="M190.20000000000002 73.2 L195.8 78.8" stroke="#181818" stroke-width="2.7" stroke-linecap="round"/><path d="M190.8 73.60000000000001 L195.6 78.5" stroke="#e8e8e8" stroke-width="1.1" stroke-linecap="round"/><circle cx="187.4" cy="70.2" r="3.7" fill="#a4dce2" stroke="#101010" stroke-width="1.5"/><path d="M185.4 69.8 A2.2 2.2 0 0 1 187.20000000000002 68.0" stroke="#f4ffff" stroke-width="0.9" fill="none"/>
<path d="M182.6 78.4 H187.6 M185.1 75.9 V80.9" stroke="#000" stroke-width="1.5"/>
<path d="M211.4 72.8 L217.0 78.39999999999999" stroke="#181818" stroke-width="2.7" stroke-linecap="round"/><path d="M212.0 73.2 L216.79999999999998 78.1" stroke="#e8e8e8" stroke-width="1.1" stroke-linecap="round"/><circle cx="208.6" cy="69.8" r="3.7" fill="#a4dce2" stroke="#101010" stroke-width="1.5"/><path d="M206.6 69.39999999999999 A2.2 2.2 0 0 1 208.4 67.6" stroke="#f4ffff" stroke-width="0.9" fill="none"/>
<path d="M204.8 77.6 H209.4" stroke="#000" stroke-width="1.6"/>
<rect x="226.6" y="65.4" width="15.2" height="14" fill="#a8a8a8" stroke="#101010" stroke-width="1.3"/><rect x="227" y="66" width="14.4" height="2" fill="#181830"/><path d="M228 66.9 H241" stroke="#5060c0" stroke-width="0.7" stroke-dasharray="1 1"/><rect x="229" y="69" width="3.2" height="3.8" fill="#d03838"/><rect x="229" y="73.2" width="3.2" height="3.8" fill="#38a848"/><rect x="232.8" y="69" width="2.8" height="3.2" fill="#e8e030"/><rect x="232.8" y="72.2" width="2.8" height="4.8" fill="#a0dce4"/><rect x="236.2" y="69" width="2.8" height="2.2" fill="#2828a0"/><rect x="236.2" y="71.2" width="2.8" height="3.6" fill="#101010"/><rect x="237" y="75.4" width="1.6" height="1.4" fill="#d03838"/>
<path d="M248.2 72.2 H264.8 M256.6 63.8 V76" stroke="#000" stroke-width="1.1"/><path d="M257.2 73.4 V81 L259 79.2 L260.4 82 L261.4 81.4 L260 78.8 L262.2 78.6 Z" fill="#fff" stroke="#000" stroke-width="0.7"/>
<path d="M272 65.6 V73.4 L274 71.6 L275.4 74.2 L276.4 73.6 L275 71.2 L277.2 71 Z" fill="#e8e8e8" stroke="#909090" stroke-width="0.7"/><rect x="273.8" y="73" width="12.6" height="7" fill="#d4d4d4" stroke="#909090" stroke-width="0.7"/><path d="M273.8 75.4 H286.4 M273.8 77.8 H286.4 M277 73 V80 M280.2 73 V80 M283.4 73 V80" stroke="#909090" stroke-width="0.6"/>
<path d="M293.6 77.1 H310" stroke="#000" stroke-width="1.1"/><circle cx="301.8" cy="77.1" r="3.1" fill="#2a1a8c"/>
<path d="M316.4 77.4 H332.6" stroke="#000" stroke-width="1.1"/><path d="M316.2 74 L320.2 77.4 L316.2 80.8 Z M332.8 74 L328.8 77.4 L332.8 80.8 Z" fill="#2a1a9c"/><rect x="321.2" y="66.2" width="6.6" height="9.4" fill="#fff" stroke="#000" stroke-width="1.2"/>
<path d="M338 80.5 H355.2" stroke="#2838b0" stroke-width="1.1"/><path d="M342 72.4 H351.8 M342 72 V76 M351.8 72 V76" stroke="#143c10" stroke-width="2.2" fill="none"/><path d="M342 72.4 H351.8 M342 72 V76 M351.8 72 V76" stroke="#48b038" stroke-width="1" fill="none"/><path d="M339.6 75 H344.4 L342 80 Z M349.4 75 H354.2 L351.8 80 Z" fill="#48b038" stroke="#143c10" stroke-width="0.8"/>
<path d="M464.4 69.8 L466 67.6 L467.6 69.8 Z M464.4 75.6 L466 77.8 L467.6 75.6 Z" fill="#000"/>
</svg>
<div class="t" style="left:301.80px;margin-left:-100px;width:200px;text-align:center;top:63.97px;font-size:8.6px;line-height:10.66px;color:#000;font-weight:bold;font-family:"Liberation Serif",serif;-webkit-text-stroke:0.4px #000;"><span id="t40" style="display:inline-block;">1</span></div>
<div class="t" style="left:324.50px;margin-left:-100px;width:200px;text-align:center;top:66.09px;font-size:7.6px;line-height:9.42px;color:#000;font-weight:bold;font-family:"Liberation Serif",serif;-webkit-text-stroke:0.4px #000;"><span id="t41" style="display:inline-block;">1</span></div>
<div class="t" style="left:346.80px;margin-left:-100px;width:200px;text-align:center;top:63.94px;font-size:7.2px;line-height:8.93px;color:#48b038;font-weight:bold;-webkit-text-stroke:0.5px #1c4c14;letter-spacing:0.3px;"><span id="t42" style="display:inline-block;">1.0</span></div>
<svg style="left:145px;top:92px;" width="879" height="378" viewBox="145 92 879 378">
<clipPath id="cpx"><rect x="173.6" y="453" width="851" height="17"/></clipPath>
<path d="M171.2 452.46H173.8M171.2 447.74H173.8M171.2 443.02H173.8M171.2 438.30H173.8M171.2 433.58H173.8M171.2 428.86H173.8M171.2 424.14H173.8M171.2 419.42H173.8M171.2 414.70H173.8M171.2 409.98H173.8M171.2 405.26H173.8M171.2 400.54H173.8M171.2 395.82H173.8M171.2 391.10H173.8M171.2 386.38H173.8M171.2 381.66H173.8M171.2 376.94H173.8M171.2 372.22H173.8M171.2 367.50H173.8M171.2 362.78H173.8M171.2 358.06H173.8M171.2 353.34H173.8M171.2 348.62H173.8M171.2 343.90H173.8M171.2 339.18H173.8M171.2 334.46H173.8M171.2 329.74H173.8M171.2 325.02H173.8M171.2 320.30H173.8M171.2 315.58H173.8M171.2 310.86H173.8M171.2 306.14H173.8M171.2 301.42H173.8M171.2 296.70H173.8M171.2 291.98H173.8M171.2 287.26H173.8M171.2 282.54H173.8M171.2 277.82H173.8M171.2 273.10H173.8M171.2 268.38H173.8M171.2 263.66H173.8M171.2 258.94H173.8M171.2 254.22H173.8M171.2 249.50H173.8M171.2 244.78H173.8M171.2 240.06H173.8M171.2 235.34H173.8M171.2 230.62H173.8M171.2 225.90H173.8M171.2 221.18H173.8M171.2 216.46H173.8M171.2 211.74H173.8M171.2 207.02H173.8M171.2 202.30H173.8M171.2 197.58H173.8M171.2 192.86H173.8M171.2 188.14H173.8M171.2 183.42H173.8M171.2 178.70H173.8M171.2 173.98H173.8M171.2 169.26H173.8M171.2 164.54H173.8M171.2 159.82H173.8M171.2 155.10H173.8M171.2 150.38H173.8M171.2 145.66H173.8M171.2 140.94H173.8M171.2 136.22H173.8M171.2 131.50H173.8M171.2 126.78H173.8M171.2 122.06H173.8M171.2 117.34H173.8M171.2 112.62H173.8M171.2 107.90H173.8M171.2 103.18H173.8M171.2 98.46H173.8M171.2 93.74H173.8" stroke="#000" stroke-width="0.9"/>
<path d="M168.8 438.30H173.8M168.8 414.70H173.8M168.8 391.10H173.8M168.8 367.50H173.8M168.8 343.90H173.8M168.8 320.30H173.8M168.8 296.70H173.8M168.8 273.10H173.8M168.8 249.50H173.8M168.8 225.90H173.8M168.8 202.30H173.8M168.8 178.70H173.8M168.8 155.10H173.8M168.8 131.50H173.8M168.8 107.90H173.8" stroke="#000" stroke-width="1"/>
<text x="168.20" y="441.80" font-size="10.5" text-anchor="end" fill="#000" textLength="14.25" lengthAdjust="spacingAndGlyphs">−45</text>
<text x="168.20" y="418.20" font-size="10.5" text-anchor="end" fill="#000" textLength="14.25" lengthAdjust="spacingAndGlyphs">−40</text>
<text x="168.20" y="394.60" font-size="10.5" text-anchor="end" fill="#000" textLength="14.25" lengthAdjust="spacingAndGlyphs">−35</text>
<text x="168.20" y="371.00" font-size="10.5" text-anchor="end" fill="#000" textLength="14.25" lengthAdjust="spacingAndGlyphs">−30</text>
<text x="168.20" y="347.40" font-size="10.5" text-anchor="end" fill="#000" textLength="14.25" lengthAdjust="spacingAndGlyphs">−25</text>
<text x="168.20" y="323.80" font-size="10.5" text-anchor="end" fill="#000" textLength="14.25" lengthAdjust="spacingAndGlyphs">−20</text>
<text x="168.20" y="300.20" font-size="10.5" text-anchor="end" fill="#000" textLength="14.25" lengthAdjust="spacingAndGlyphs">−15</text>
<text x="168.20" y="276.60" font-size="10.5" text-anchor="end" fill="#000" textLength="14.25" lengthAdjust="spacingAndGlyphs">−10</text>
<text x="168.20" y="253.00" font-size="10.5" text-anchor="end" fill="#000" textLength="9.50" lengthAdjust="spacingAndGlyphs">−5</text>
<text x="168.20" y="229.40" font-size="10.5" text-anchor="end" fill="#000" textLength="4.75" lengthAdjust="spacingAndGlyphs">0</text>
<text x="168.20" y="205.80" font-size="10.5" text-anchor="end" fill="#000" textLength="4.75" lengthAdjust="spacingAndGlyphs">5</text>
<text x="168.20" y="182.20" font-size="10.5" text-anchor="end" fill="#000" textLength="9.50" lengthAdjust="spacingAndGlyphs">10</text>
<text x="168.20" y="158.60" font-size="10.5" text-anchor="end" fill="#000" textLength="9.50" lengthAdjust="spacingAndGlyphs">15</text>
<text x="168.20" y="135.00" font-size="10.5" text-anchor="end" fill="#000" textLength="9.50" lengthAdjust="spacingAndGlyphs">20</text>
<text x="168.20" y="111.40" font-size="10.5" text-anchor="end" fill="#000" textLength="9.50" lengthAdjust="spacingAndGlyphs">25</text>
<path d="M178.82 453.8V456.6M183.54 453.8V456.6M188.26 453.8V456.6M192.98 453.8V456.6M202.42 453.8V456.6M207.14 453.8V456.6M211.86 453.8V456.6M216.58 453.8V456.6M226.02 453.8V456.6M230.74 453.8V456.6M235.46 453.8V456.6M240.18 453.8V456.6M249.62 453.8V456.6M254.34 453.8V456.6M259.06 453.8V456.6M263.78 453.8V456.6M273.22 453.8V456.6M277.94 453.8V456.6M282.66 453.8V456.6M287.38 453.8V456.6M296.82 453.8V456.6M301.54 453.8V456.6M306.26 453.8V456.6M310.98 453.8V456.6M320.42 453.8V456.6M325.14 453.8V456.6M329.86 453.8V456.6M334.58 453.8V456.6M344.02 453.8V456.6M348.74 453.8V456.6M353.46 453.8V456.6M358.18 453.8V456.6M367.62 453.8V456.6M372.34 453.8V456.6M377.06 453.8V456.6M381.78 453.8V456.6M391.22 453.8V456.6M395.94 453.8V456.6M400.66 453.8V456.6M405.38 453.8V456.6M414.82 453.8V456.6M419.54 453.8V456.6M424.26 453.8V456.6M428.98 453.8V456.6M438.42 453.8V456.6M443.14 453.8V456.6M447.86 453.8V456.6M452.58 453.8V456.6M462.02 453.8V456.6M466.74 453.8V456.6M471.46 453.8V456.6M476.18 453.8V456.6M485.62 453.8V456.6M490.34 453.8V456.6M495.06 453.8V456.6M499.78 453.8V456.6M509.22 453.8V456.6M513.94 453.8V456.6M518.66 453.8V456.6M523.38 453.8V456.6M532.82 453.8V456.6M537.54 453.8V456.6M542.26 453.8V456.6M546.98 453.8V456.6M556.42 453.8V456.6M561.14 453.8V456.6M565.86 453.8V456.6M570.58 453.8V456.6M580.02 453.8V456.6M584.74 453.8V456.6M589.46 453.8V456.6M594.18 453.8V456.6M603.62 453.8V456.6M608.34 453.8V456.6M613.06 453.8V456.6M617.78 453.8V456.6M627.22 453.8V456.6M631.94 453.8V456.6M636.66 453.8V456.6M641.38 453.8V456.6M650.82 453.8V456.6M655.54 453.8V456.6M660.26 453.8V456.6M664.98 453.8V456.6M674.42 453.8V456.6M679.14 453.8V456.6M683.86 453.8V456.6M688.58 453.8V456.6M698.02 453.8V456.6M702.74 453.8V456.6M707.46 453.8V456.6M712.18 453.8V456.6M721.62 453.8V456.6M726.34 453.8V456.6M731.06 453.8V456.6M735.78 453.8V456.6M745.22 453.8V456.6M749.94 453.8V456.6M754.66 453.8V456.6M759.38 453.8V456.6M768.82 453.8V456.6M773.54 453.8V456.6M778.26 453.8V456.6M782.98 453.8V456.6M792.42 453.8V456.6M797.14 453.8V456.6M801.86 453.8V456.6M806.58 453.8V456.6M816.02 453.8V456.6M820.74 453.8V456.6M825.46 453.8V456.6M830.18 453.8V456.6M839.62 453.8V456.6M844.34 453.8V456.6M849.06 453.8V456.6M853.78 453.8V456.6M863.22 453.8V456.6M867.94 453.8V456.6M872.66 453.8V456.6M877.38 453.8V456.6M886.82 453.8V456.6M891.54 453.8V456.6M896.26 453.8V456.6M900.98 453.8V456.6M910.42 453.8V456.6M915.14 453.8V456.6M919.86 453.8V456.6M924.58 453.8V456.6M934.02 453.8V456.6M938.74 453.8V456.6M943.46 453.8V456.6M948.18 453.8V456.6M957.62 453.8V456.6M962.34 453.8V456.6M967.06 453.8V456.6M971.78 453.8V456.6M981.22 453.8V456.6M985.94 453.8V456.6M990.66 453.8V456.6M995.38 453.8V456.6M1004.82 453.8V456.6M1009.54 453.8V456.6M1014.26 453.8V456.6M1018.98 453.8V456.6" stroke="#000" stroke-width="0.9"/><path d="M174.10 453.8V458.8M197.70 453.8V458.8M221.30 453.8V458.8M244.90 453.8V458.8M268.50 453.8V458.8M292.10 453.8V458.8M315.70 453.8V458.8M339.30 453.8V458.8M362.90 453.8V458.8M386.50 453.8V458.8M410.10 453.8V458.8M433.70 453.8V458.8M457.30 453.8V458.8M480.90 453.8V458.8M504.50 453.8V458.8M528.10 453.8V458.8M551.70 453.8V458.8M575.30 453.8V458.8M598.90 453.8V458.8M622.50 453.8V458.8M646.10 453.8V458.8M669.70 453.8V458.8M693.30 453.8V458.8M716.90 453.8V458.8M740.50 453.8V458.8M764.10 453.8V458.8M787.70 453.8V458.8M811.30 453.8V458.8M834.90 453.8V458.8M858.50 453.8V458.8M882.10 453.8V458.8M905.70 453.8V458.8M929.30 453.8V458.8M952.90 453.8V458.8M976.50 453.8V458.8M1000.10 453.8V458.8M1023.70 453.8V458.8" stroke="#000" stroke-width="1"/>
<g clip-path="url(#cpx)">
<text x="173.70" y="467.10" font-size="10.5" text-anchor="middle" fill="#000" textLength="14.25" lengthAdjust="spacingAndGlyphs">−90</text>
<text x="197.30" y="467.10" font-size="10.5" text-anchor="middle" fill="#000" textLength="14.25" lengthAdjust="spacingAndGlyphs">−85</text>
<text x="220.90" y="467.10" font-size="10.5" text-anchor="middle" fill="#000" textLength="14.25" lengthAdjust="spacingAndGlyphs">−80</text>
<text x="244.50" y="467.10" font-size="10.5" text-anchor="middle" fill="#000" textLength="14.25" lengthAdjust="spacingAndGlyphs">−75</text>
<text x="268.10" y="467.10" font-size="10.5" text-anchor="middle" fill="#000" textLength="14.25" lengthAdjust="spacingAndGlyphs">−70</text>
<text x="291.70" y="467.10" font-size="10.5" text-anchor="middle" fill="#000" textLength="14.25" lengthAdjust="spacingAndGlyphs">−65</text>
<text x="315.30" y="467.10" font-size="10.5" text-anchor="middle" fill="#000" textLength="14.25" lengthAdjust="spacingAndGlyphs">−60</text>
<text x="338.90" y="467.10" font-size="10.5" text-anchor="middle" fill="#000" textLength="14.25" lengthAdjust="spacingAndGlyphs">−55</text>
<text x="362.50" y="467.10" font-size="10.5" text-anchor="middle" fill="#000" textLength="14.25" lengthAdjust="spacingAndGlyphs">−50</text>
<text x="386.10" y="467.10" font-size="10.5" text-anchor="middle" fill="#000" textLength="14.25" lengthAdjust="spacingAndGlyphs">−45</text>
<text x="409.70" y="467.10" font-size="10.5" text-anchor="middle" fill="#000" textLength="14.25" lengthAdjust="spacingAndGlyphs">−40</text>
<text x="433.30" y="467.10" font-size="10.5" text-anchor="middle" fill="#000" textLength="14.25" lengthAdjust="spacingAndGlyphs">−35</text>
<text x="456.90" y="467.10" font-size="10.5" text-anchor="middle" fill="#000" textLength="14.25" lengthAdjust="spacingAndGlyphs">−30</text>
<text x="480.50" y="467.10" font-size="10.5" text-anchor="middle" fill="#000" textLength="14.25" lengthAdjust="spacingAndGlyphs">−25</text>
<text x="504.10" y="467.10" font-size="10.5" text-anchor="middle" fill="#000" textLength="14.25" lengthAdjust="spacingAndGlyphs">−20</text>
<text x="527.70" y="467.10" font-size="10.5" text-anchor="middle" fill="#000" textLength="14.25" lengthAdjust="spacingAndGlyphs">−15</text>
<text x="551.30" y="467.10" font-size="10.5" text-anchor="middle" fill="#000" textLength="14.25" lengthAdjust="spacingAndGlyphs">−10</text>
<text x="574.90" y="467.10" font-size="10.5" text-anchor="middle" fill="#000" textLength="9.50" lengthAdjust="spacingAndGlyphs">−5</text>
<text x="598.50" y="467.10" font-size="10.5" text-anchor="middle" fill="#000" textLength="4.75" lengthAdjust="spacingAndGlyphs">0</text>
<text x="622.10" y="467.10" font-size="10.5" text-anchor="middle" fill="#000" textLength="4.75" lengthAdjust="spacingAndGlyphs">5</text>
<text x="645.70" y="467.10" font-size="10.5" text-anchor="middle" fill="#000" textLength="9.50" lengthAdjust="spacingAndGlyphs">10</text>
<text x="669.30" y="467.10" font-size="10.5" text-anchor="middle" fill="#000" textLength="9.50" lengthAdjust="spacingAndGlyphs">15</text>
<text x="692.90" y="467.10" font-size="10.5" text-anchor="middle" fill="#000" textLength="9.50" lengthAdjust="spacingAndGlyphs">20</text>
<text x="716.50" y="467.10" font-size="10.5" text-anchor="middle" fill="#000" textLength="9.50" lengthAdjust="spacingAndGlyphs">25</text>
<text x="740.10" y="467.10" font-size="10.5" text-anchor="middle" fill="#000" textLength="9.50" lengthAdjust="spacingAndGlyphs">30</text>
<text x="763.70" y="467.10" font-size="10.5" text-anchor="middle" fill="#000" textLength="9.50" lengthAdjust="spacingAndGlyphs">35</text>
<text x="787.30" y="467.10" font-size="10.5" text-anchor="middle" fill="#000" textLength="9.50" lengthAdjust="spacingAndGlyphs">40</text>
<text x="810.90" y="467.10" font-size="10.5" text-anchor="middle" fill="#000" textLength="9.50" lengthAdjust="spacingAndGlyphs">45</text>
<text x="834.50" y="467.10" font-size="10.5" text-anchor="middle" fill="#000" textLength="9.50" lengthAdjust="spacingAndGlyphs">50</text>
<text x="858.10" y="467.10" font-size="10.5" text-anchor="middle" fill="#000" textLength="9.50" lengthAdjust="spacingAndGlyphs">55</text>
<text x="881.70" y="467.10" font-size="10.5" text-anchor="middle" fill="#000" textLength="9.50" lengthAdjust="spacingAndGlyphs">60</text>
<text x="905.30" y="467.10" font-size="10.5" text-anchor="middle" fill="#000" textLength="9.50" lengthAdjust="spacingAndGlyphs">65</text>
<text x="928.90" y="467.10" font-size="10.5" text-anchor="middle" fill="#000" textLength="9.50" lengthAdjust="spacingAndGlyphs">70</text>
<text x="952.50" y="467.10" font-size="10.5" text-anchor="middle" fill="#000" textLength="9.50" lengthAdjust="spacingAndGlyphs">75</text>
<text x="976.10" y="467.10" font-size="10.5" text-anchor="middle" fill="#000" textLength="9.50" lengthAdjust="spacingAndGlyphs">80</text>
<text x="999.70" y="467.10" font-size="10.5" text-anchor="middle" fill="#000" textLength="9.50" lengthAdjust="spacingAndGlyphs">85</text>
</g>
<path d="M386.17 226.70L433.41 226.70M386.17 255.02L409.79 226.70M764.09 226.70L811.33 226.70M787.71 226.70L811.33 255.02" stroke="#4c5aa2" stroke-width="4.4" fill="none" stroke-linecap="butt"/>
<path d="M244.45 226.70L268.07 226.70M268.07 226.70L291.69 226.70M291.69 226.70L315.31 226.70M315.31 226.70L338.93 226.70M338.93 226.70L362.55 226.70M362.55 226.70L386.17 226.70M386.17 226.70L409.79 226.70M409.79 226.70L433.41 226.70M433.41 226.70L457.03 226.70M457.03 226.70L480.65 226.70M480.65 226.70L504.27 226.70M504.27 226.70L527.89 226.70M527.89 226.70L551.51 226.70M551.51 226.70L575.13 226.70M575.13 226.70L598.75 226.70M598.75 226.70L622.37 226.70M622.37 226.70L645.99 226.70M645.99 226.70L669.61 226.70M669.61 226.70L693.23 226.70M693.23 226.70L716.85 226.70M716.85 226.70L740.47 226.70M740.47 226.70L764.09 226.70M764.09 226.70L787.71 226.70M787.71 226.70L811.33 226.70M811.33 226.70L834.95 226.70M834.95 226.70L858.57 226.70M858.57 226.70L882.19 226.70M882.19 226.70L905.81 226.70M905.81 226.70L929.43 226.70M929.43 226.70L953.05 226.70M409.79 226.70L433.41 204.57M433.41 204.57L457.03 185.40M457.03 185.40L480.65 169.17M480.65 169.17L504.27 155.90M504.27 155.90L527.89 145.57M527.89 145.57L551.51 138.20M551.51 138.20L575.13 133.77M575.13 133.77L598.75 132.30M598.75 132.30L622.37 133.77M622.37 133.77L645.99 138.20M645.99 138.20L669.61 145.57M669.61 145.57L693.23 155.90M693.23 155.90L716.85 169.17M716.85 169.17L740.47 185.40M740.47 185.40L764.09 204.57M764.09 204.57L787.71 226.70M291.69 226.70L315.31 245.58M315.31 245.58L338.93 264.46M338.93 264.46L362.55 283.34M362.55 283.34L386.17 255.02M386.17 255.02L409.79 226.70M362.55 283.34L362.55 302.22M362.55 302.22L362.55 321.10M787.71 226.70L811.33 255.02M811.33 255.02L834.95 283.34M834.95 283.34L858.57 264.46M858.57 264.46L882.19 245.58M882.19 245.58L905.81 226.70M834.95 283.34L834.95 302.22M834.95 302.22L834.95 321.10" stroke="#1e2a6c" stroke-width="2.1" fill="none" stroke-linecap="round"/>
<rect x="258.56" y="230.50" width="6.3" height="9.7" fill="none" stroke="#2a3480" stroke-width="1"/><text x="261.71" y="238.70" font-size="10" text-anchor="middle" fill="#2a3480" textLength="4.60" lengthAdjust="spacingAndGlyphs">1</text>
<rect x="282.18" y="230.50" width="6.3" height="9.7" fill="none" stroke="#2a3480" stroke-width="1"/><text x="285.33" y="238.70" font-size="10" text-anchor="middle" fill="#2a3480" textLength="4.60" lengthAdjust="spacingAndGlyphs">2</text>
<rect x="305.80" y="230.50" width="6.3" height="9.7" fill="none" stroke="#2a3480" stroke-width="1"/><text x="308.95" y="238.70" font-size="10" text-anchor="middle" fill="#2a3480" textLength="4.60" lengthAdjust="spacingAndGlyphs">3</text>
<rect x="329.42" y="230.50" width="6.3" height="9.7" fill="none" stroke="#2a3480" stroke-width="1"/><text x="332.57" y="238.70" font-size="10" text-anchor="middle" fill="#2a3480" textLength="4.60" lengthAdjust="spacingAndGlyphs">4</text>
<rect x="353.04" y="230.50" width="6.3" height="9.7" fill="none" stroke="#2a3480" stroke-width="1"/><text x="356.19" y="238.70" font-size="10" text-anchor="middle" fill="#2a3480" textLength="4.60" lengthAdjust="spacingAndGlyphs">5</text>
<rect x="376.66" y="230.50" width="6.3" height="9.7" fill="none" stroke="#2a3480" stroke-width="1"/><text x="379.81" y="238.70" font-size="10" text-anchor="middle" fill="#2a3480" textLength="4.60" lengthAdjust="spacingAndGlyphs">6</text>
<rect x="400.28" y="230.50" width="6.3" height="9.7" fill="none" stroke="#2a3480" stroke-width="1"/><text x="403.43" y="238.70" font-size="10" text-anchor="middle" fill="#2a3480" textLength="4.60" lengthAdjust="spacingAndGlyphs">7</text>
<rect x="423.90" y="230.50" width="6.3" height="9.7" fill="none" stroke="#2a3480" stroke-width="1"/><text x="427.05" y="238.70" font-size="10" text-anchor="middle" fill="#2a3480" textLength="4.60" lengthAdjust="spacingAndGlyphs">8</text>
<rect x="447.52" y="230.50" width="6.3" height="9.7" fill="none" stroke="#2a3480" stroke-width="1"/><text x="450.67" y="238.70" font-size="10" text-anchor="middle" fill="#2a3480" textLength="4.60" lengthAdjust="spacingAndGlyphs">9</text>
<rect x="471.14" y="230.50" width="10.9" height="9.7" fill="none" stroke="#2a3480" stroke-width="1"/><text x="476.59" y="238.70" font-size="10" text-anchor="middle" fill="#2a3480" textLength="9.20" lengthAdjust="spacingAndGlyphs">10</text>
<rect x="494.76" y="230.50" width="10.9" height="9.7" fill="none" stroke="#2a3480" stroke-width="1"/><text x="500.21" y="238.70" font-size="10" text-anchor="middle" fill="#2a3480" textLength="9.20" lengthAdjust="spacingAndGlyphs">11</text>
<rect x="518.38" y="230.50" width="10.9" height="9.7" fill="none" stroke="#2a3480" stroke-width="1"/><text x="523.83" y="238.70" font-size="10" text-anchor="middle" fill="#2a3480" textLength="9.20" lengthAdjust="spacingAndGlyphs">12</text>
<rect x="542.00" y="230.50" width="10.9" height="9.7" fill="none" stroke="#2a3480" stroke-width="1"/><text x="547.45" y="238.70" font-size="10" text-anchor="middle" fill="#2a3480" textLength="9.20" lengthAdjust="spacingAndGlyphs">13</text>
<rect x="565.62" y="230.50" width="10.9" height="9.7" fill="none" stroke="#2a3480" stroke-width="1"/><text x="571.07" y="238.70" font-size="10" text-anchor="middle" fill="#2a3480" textLength="9.20" lengthAdjust="spacingAndGlyphs">14</text>
<rect x="589.24" y="230.50" width="10.9" height="9.7" fill="none" stroke="#2a3480" stroke-width="1"/><text x="594.69" y="238.70" font-size="10" text-anchor="middle" fill="#2a3480" textLength="9.20" lengthAdjust="spacingAndGlyphs">15</text>
<rect x="612.86" y="230.50" width="10.9" height="9.7" fill="none" stroke="#2a3480" stroke-width="1"/><text x="618.31" y="238.70" font-size="10" text-anchor="middle" fill="#2a3480" textLength="9.20" lengthAdjust="spacingAndGlyphs">16</text>
<rect x="636.48" y="230.50" width="10.9" height="9.7" fill="none" stroke="#2a3480" stroke-width="1"/><text x="641.93" y="238.70" font-size="10" text-anchor="middle" fill="#2a3480" textLength="9.20" lengthAdjust="spacingAndGlyphs">17</text>
<rect x="660.10" y="230.50" width="10.9" height="9.7" fill="none" stroke="#2a3480" stroke-width="1"/><text x="665.55" y="238.70" font-size="10" text-anchor="middle" fill="#2a3480" textLength="9.20" lengthAdjust="spacingAndGlyphs">18</text>
<rect x="683.72" y="230.50" width="10.9" height="9.7" fill="none" stroke="#2a3480" stroke-width="1"/><text x="689.17" y="238.70" font-size="10" text-anchor="middle" fill="#2a3480" textLength="9.20" lengthAdjust="spacingAndGlyphs">19</text>
<rect x="707.34" y="230.50" width="10.9" height="9.7" fill="none" stroke="#2a3480" stroke-width="1"/><text x="712.79" y="238.70" font-size="10" text-anchor="middle" fill="#2a3480" textLength="9.20" lengthAdjust="spacingAndGlyphs">20</text>
<rect x="730.96" y="230.50" width="10.9" height="9.7" fill="none" stroke="#2a3480" stroke-width="1"/><text x="736.41" y="238.70" font-size="10" text-anchor="middle" fill="#2a3480" textLength="9.20" lengthAdjust="spacingAndGlyphs">21</text>
<rect x="754.58" y="230.50" width="10.9" height="9.7" fill="none" stroke="#2a3480" stroke-width="1"/><text x="760.03" y="238.70" font-size="10" text-anchor="middle" fill="#2a3480" textLength="9.20" lengthAdjust="spacingAndGlyphs">22</text>
<rect x="778.20" y="230.50" width="10.9" height="9.7" fill="none" stroke="#2a3480" stroke-width="1"/><text x="783.65" y="238.70" font-size="10" text-anchor="middle" fill="#2a3480" textLength="9.20" lengthAdjust="spacingAndGlyphs">23</text>
<rect x="801.82" y="230.50" width="10.9" height="9.7" fill="none" stroke="#2a3480" stroke-width="1"/><text x="807.27" y="238.70" font-size="10" text-anchor="middle" fill="#2a3480" textLength="9.20" lengthAdjust="spacingAndGlyphs">24</text>
<rect x="825.44" y="230.50" width="10.9" height="9.7" fill="none" stroke="#2a3480" stroke-width="1"/><text x="830.89" y="238.70" font-size="10" text-anchor="middle" fill="#2a3480" textLength="9.20" lengthAdjust="spacingAndGlyphs">25</text>
<rect x="849.06" y="230.50" width="10.9" height="9.7" fill="none" stroke="#2a3480" stroke-width="1"/><text x="854.51" y="238.70" font-size="10" text-anchor="middle" fill="#2a3480" textLength="9.20" lengthAdjust="spacingAndGlyphs">26</text>
<rect x="872.68" y="230.50" width="10.9" height="9.7" fill="none" stroke="#2a3480" stroke-width="1"/><text x="878.13" y="238.70" font-size="10" text-anchor="middle" fill="#2a3480" textLength="9.20" lengthAdjust="spacingAndGlyphs">27</text>
<rect x="896.30" y="230.50" width="10.9" height="9.7" fill="none" stroke="#2a3480" stroke-width="1"/><text x="901.75" y="238.70" font-size="10" text-anchor="middle" fill="#2a3480" textLength="9.20" lengthAdjust="spacingAndGlyphs">28</text>
<rect x="919.92" y="230.50" width="10.9" height="9.7" fill="none" stroke="#2a3480" stroke-width="1"/><text x="925.37" y="238.70" font-size="10" text-anchor="middle" fill="#2a3480" textLength="9.20" lengthAdjust="spacingAndGlyphs">29</text>
<rect x="943.54" y="230.50" width="10.9" height="9.7" fill="none" stroke="#2a3480" stroke-width="1"/><text x="948.99" y="238.70" font-size="10" text-anchor="middle" fill="#2a3480" textLength="9.20" lengthAdjust="spacingAndGlyphs">30</text>
<rect x="423.90" y="219.44" width="10.9" height="9.7" fill="none" stroke="#2a3480" stroke-width="1"/><text x="429.35" y="227.64" font-size="10" text-anchor="middle" fill="#2a3480" textLength="9.20" lengthAdjust="spacingAndGlyphs">31</text>
<rect x="447.52" y="198.79" width="10.9" height="9.7" fill="none" stroke="#2a3480" stroke-width="1"/><text x="452.97" y="206.99" font-size="10" text-anchor="middle" fill="#2a3480" textLength="9.20" lengthAdjust="spacingAndGlyphs">32</text>
<rect x="471.14" y="181.09" width="10.9" height="9.7" fill="none" stroke="#2a3480" stroke-width="1"/><text x="476.59" y="189.29" font-size="10" text-anchor="middle" fill="#2a3480" textLength="9.20" lengthAdjust="spacingAndGlyphs">33</text>
<rect x="494.76" y="166.34" width="10.9" height="9.7" fill="none" stroke="#2a3480" stroke-width="1"/><text x="500.21" y="174.54" font-size="10" text-anchor="middle" fill="#2a3480" textLength="9.20" lengthAdjust="spacingAndGlyphs">34</text>
<rect x="518.38" y="154.54" width="10.9" height="9.7" fill="none" stroke="#2a3480" stroke-width="1"/><text x="523.83" y="162.74" font-size="10" text-anchor="middle" fill="#2a3480" textLength="9.20" lengthAdjust="spacingAndGlyphs">35</text>
<rect x="542.00" y="145.69" width="10.9" height="9.7" fill="none" stroke="#2a3480" stroke-width="1"/><text x="547.45" y="153.89" font-size="10" text-anchor="middle" fill="#2a3480" textLength="9.20" lengthAdjust="spacingAndGlyphs">36</text>
<rect x="565.62" y="139.79" width="10.9" height="9.7" fill="none" stroke="#2a3480" stroke-width="1"/><text x="571.07" y="147.99" font-size="10" text-anchor="middle" fill="#2a3480" textLength="9.20" lengthAdjust="spacingAndGlyphs">37</text>
<rect x="589.24" y="136.84" width="10.9" height="9.7" fill="none" stroke="#2a3480" stroke-width="1"/><text x="594.69" y="145.04" font-size="10" text-anchor="middle" fill="#2a3480" textLength="9.20" lengthAdjust="spacingAndGlyphs">38</text>
<rect x="612.86" y="136.84" width="10.9" height="9.7" fill="none" stroke="#2a3480" stroke-width="1"/><text x="618.31" y="145.04" font-size="10" text-anchor="middle" fill="#2a3480" textLength="9.20" lengthAdjust="spacingAndGlyphs">39</text>
<rect x="636.48" y="139.79" width="10.9" height="9.7" fill="none" stroke="#2a3480" stroke-width="1"/><text x="641.93" y="147.99" font-size="10" text-anchor="middle" fill="#2a3480" textLength="9.20" lengthAdjust="spacingAndGlyphs">40</text>
<rect x="660.10" y="145.69" width="10.9" height="9.7" fill="none" stroke="#2a3480" stroke-width="1"/><text x="665.55" y="153.89" font-size="10" text-anchor="middle" fill="#2a3480" textLength="9.20" lengthAdjust="spacingAndGlyphs">41</text>
<rect x="683.72" y="154.54" width="10.9" height="9.7" fill="none" stroke="#2a3480" stroke-width="1"/><text x="689.17" y="162.74" font-size="10" text-anchor="middle" fill="#2a3480" textLength="9.20" lengthAdjust="spacingAndGlyphs">42</text>
<rect x="707.34" y="166.34" width="10.9" height="9.7" fill="none" stroke="#2a3480" stroke-width="1"/><text x="712.79" y="174.54" font-size="10" text-anchor="middle" fill="#2a3480" textLength="9.20" lengthAdjust="spacingAndGlyphs">43</text>
<rect x="730.96" y="181.09" width="10.9" height="9.7" fill="none" stroke="#2a3480" stroke-width="1"/><text x="736.41" y="189.29" font-size="10" text-anchor="middle" fill="#2a3480" textLength="9.20" lengthAdjust="spacingAndGlyphs">44</text>
<rect x="754.58" y="198.79" width="10.9" height="9.7" fill="none" stroke="#2a3480" stroke-width="1"/><text x="760.03" y="206.99" font-size="10" text-anchor="middle" fill="#2a3480" textLength="9.20" lengthAdjust="spacingAndGlyphs">45</text>
<rect x="778.20" y="219.44" width="10.9" height="9.7" fill="none" stroke="#2a3480" stroke-width="1"/><text x="783.65" y="227.64" font-size="10" text-anchor="middle" fill="#2a3480" textLength="9.20" lengthAdjust="spacingAndGlyphs">46</text>
<rect x="305.80" y="239.94" width="10.9" height="9.7" fill="none" stroke="#2a3480" stroke-width="1"/><text x="311.25" y="248.14" font-size="10" text-anchor="middle" fill="#2a3480" textLength="9.20" lengthAdjust="spacingAndGlyphs">51</text>
<rect x="329.42" y="258.82" width="10.9" height="9.7" fill="none" stroke="#2a3480" stroke-width="1"/><text x="334.87" y="267.02" font-size="10" text-anchor="middle" fill="#2a3480" textLength="9.20" lengthAdjust="spacingAndGlyphs">52</text>
<rect x="353.04" y="277.70" width="10.9" height="9.7" fill="none" stroke="#2a3480" stroke-width="1"/><text x="358.49" y="285.90" font-size="10" text-anchor="middle" fill="#2a3480" textLength="9.20" lengthAdjust="spacingAndGlyphs">53</text>
<rect x="376.66" y="272.98" width="10.9" height="9.7" fill="none" stroke="#2a3480" stroke-width="1"/><text x="382.11" y="281.18" font-size="10" text-anchor="middle" fill="#2a3480" textLength="9.20" lengthAdjust="spacingAndGlyphs">54</text>
<rect x="400.28" y="244.66" width="10.9" height="9.7" fill="none" stroke="#2a3480" stroke-width="1"/><text x="405.73" y="252.86" font-size="10" text-anchor="middle" fill="#2a3480" textLength="9.20" lengthAdjust="spacingAndGlyphs">55</text>
<rect x="364.85" y="296.58" width="10.9" height="9.7" fill="none" stroke="#2a3480" stroke-width="1"/><text x="370.30" y="304.78" font-size="10" text-anchor="middle" fill="#2a3480" textLength="9.20" lengthAdjust="spacingAndGlyphs">56</text>
<rect x="364.85" y="315.46" width="10.9" height="9.7" fill="none" stroke="#2a3480" stroke-width="1"/><text x="370.30" y="323.66" font-size="10" text-anchor="middle" fill="#2a3480" textLength="9.20" lengthAdjust="spacingAndGlyphs">57</text>
<rect x="801.82" y="244.66" width="10.9" height="9.7" fill="none" stroke="#2a3480" stroke-width="1"/><text x="807.27" y="252.86" font-size="10" text-anchor="middle" fill="#2a3480" textLength="9.20" lengthAdjust="spacingAndGlyphs">61</text>
<rect x="825.44" y="272.98" width="10.9" height="9.7" fill="none" stroke="#2a3480" stroke-width="1"/><text x="830.89" y="281.18" font-size="10" text-anchor="middle" fill="#2a3480" textLength="9.20" lengthAdjust="spacingAndGlyphs">62</text>
<rect x="849.06" y="277.70" width="10.9" height="9.7" fill="none" stroke="#2a3480" stroke-width="1"/><text x="854.51" y="285.90" font-size="10" text-anchor="middle" fill="#2a3480" textLength="9.20" lengthAdjust="spacingAndGlyphs">63</text>
<rect x="872.68" y="258.82" width="10.9" height="9.7" fill="none" stroke="#2a3480" stroke-width="1"/><text x="878.13" y="267.02" font-size="10" text-anchor="middle" fill="#2a3480" textLength="9.20" lengthAdjust="spacingAndGlyphs">64</text>
<rect x="896.30" y="239.94" width="10.9" height="9.7" fill="none" stroke="#2a3480" stroke-width="1"/><text x="901.75" y="248.14" font-size="10" text-anchor="middle" fill="#2a3480" textLength="9.20" lengthAdjust="spacingAndGlyphs">65</text>
<rect x="837.25" y="296.58" width="10.9" height="9.7" fill="none" stroke="#2a3480" stroke-width="1"/><text x="842.70" y="304.78" font-size="10" text-anchor="middle" fill="#2a3480" textLength="9.20" lengthAdjust="spacingAndGlyphs">66</text>
<rect x="837.25" y="315.46" width="10.9" height="9.7" fill="none" stroke="#2a3480" stroke-width="1"/><text x="842.70" y="323.66" font-size="10" text-anchor="middle" fill="#2a3480" textLength="9.20" lengthAdjust="spacingAndGlyphs">67</text>
<circle cx="244.45" cy="226.70" r="2.65" fill="#2a1a6c"/>
<text x="240.95" y="222.80" font-size="10.5" text-anchor="end" fill="#2a3480" textLength="4.75" lengthAdjust="spacingAndGlyphs">1</text>
<circle cx="268.07" cy="226.70" r="2.65" fill="#2a1a6c"/>
<text x="264.57" y="222.80" font-size="10.5" text-anchor="end" fill="#2a3480" textLength="4.75" lengthAdjust="spacingAndGlyphs">2</text>
<circle cx="291.69" cy="226.70" r="2.65" fill="#2a1a6c"/>
<text x="288.19" y="222.80" font-size="10.5" text-anchor="end" fill="#2a3480" textLength="4.75" lengthAdjust="spacingAndGlyphs">3</text>
<circle cx="315.31" cy="226.70" r="2.65" fill="#2a1a6c"/>
<text x="311.81" y="222.80" font-size="10.5" text-anchor="end" fill="#2a3480" textLength="4.75" lengthAdjust="spacingAndGlyphs">4</text>
<circle cx="338.93" cy="226.70" r="2.65" fill="#2a1a6c"/>
<text x="335.43" y="222.80" font-size="10.5" text-anchor="end" fill="#2a3480" textLength="4.75" lengthAdjust="spacingAndGlyphs">5</text>
<circle cx="362.55" cy="226.70" r="2.65" fill="#2a1a6c"/>
<text x="359.05" y="222.80" font-size="10.5" text-anchor="end" fill="#2a3480" textLength="4.75" lengthAdjust="spacingAndGlyphs">6</text>
<circle cx="386.17" cy="226.70" r="2.65" fill="#2a1a6c"/>
<text x="382.67" y="222.80" font-size="10.5" text-anchor="end" fill="#2a3480" textLength="4.75" lengthAdjust="spacingAndGlyphs">7</text>
<circle cx="409.79" cy="226.70" r="2.65" fill="#2a1a6c"/>
<text x="406.29" y="222.80" font-size="10.5" text-anchor="end" fill="#2a3480" textLength="4.75" lengthAdjust="spacingAndGlyphs">8</text>
<circle cx="433.41" cy="226.70" r="2.65" fill="#2a1a6c"/>
<text x="429.91" y="222.80" font-size="10.5" text-anchor="end" fill="#2a3480" textLength="4.75" lengthAdjust="spacingAndGlyphs">9</text>
<circle cx="457.03" cy="226.70" r="2.65" fill="#2a1a6c"/>
<text x="453.53" y="222.80" font-size="10.5" text-anchor="end" fill="#2a3480" textLength="9.50" lengthAdjust="spacingAndGlyphs">10</text>
<circle cx="480.65" cy="226.70" r="2.65" fill="#2a1a6c"/>
<text x="477.15" y="222.80" font-size="10.5" text-anchor="end" fill="#2a3480" textLength="9.50" lengthAdjust="spacingAndGlyphs">11</text>
<circle cx="504.27" cy="226.70" r="2.65" fill="#2a1a6c"/>
<text x="500.77" y="222.80" font-size="10.5" text-anchor="end" fill="#2a3480" textLength="9.50" lengthAdjust="spacingAndGlyphs">12</text>
<circle cx="527.89" cy="226.70" r="2.65" fill="#2a1a6c"/>
<text x="524.39" y="222.80" font-size="10.5" text-anchor="end" fill="#2a3480" textLength="9.50" lengthAdjust="spacingAndGlyphs">13</text>
<circle cx="551.51" cy="226.70" r="2.65" fill="#2a1a6c"/>
<text x="548.01" y="222.80" font-size="10.5" text-anchor="end" fill="#2a3480" textLength="9.50" lengthAdjust="spacingAndGlyphs">14</text>
<circle cx="575.13" cy="226.70" r="2.65" fill="#2a1a6c"/>
<text x="571.63" y="222.80" font-size="10.5" text-anchor="end" fill="#2a3480" textLength="9.50" lengthAdjust="spacingAndGlyphs">15</text>
<circle cx="598.75" cy="226.70" r="2.65" fill="#2a1a6c"/>
<text x="595.25" y="222.80" font-size="10.5" text-anchor="end" fill="#2a3480" textLength="9.50" lengthAdjust="spacingAndGlyphs">16</text>
<circle cx="622.37" cy="226.70" r="2.65" fill="#2a1a6c"/>
<text x="618.87" y="222.80" font-size="10.5" text-anchor="end" fill="#2a3480" textLength="9.50" lengthAdjust="spacingAndGlyphs">17</text>
<circle cx="645.99" cy="226.70" r="2.65" fill="#2a1a6c"/>
<text x="642.49" y="222.80" font-size="10.5" text-anchor="end" fill="#2a3480" textLength="9.50" lengthAdjust="spacingAndGlyphs">18</text>
<circle cx="669.61" cy="226.70" r="2.65" fill="#2a1a6c"/>
<text x="666.11" y="222.80" font-size="10.5" text-anchor="end" fill="#2a3480" textLength="9.50" lengthAdjust="spacingAndGlyphs">19</text>
<circle cx="693.23" cy="226.70" r="2.65" fill="#2a1a6c"/>
<text x="689.73" y="222.80" font-size="10.5" text-anchor="end" fill="#2a3480" textLength="9.50" lengthAdjust="spacingAndGlyphs">20</text>
<circle cx="716.85" cy="226.70" r="2.65" fill="#2a1a6c"/>
<text x="713.35" y="222.80" font-size="10.5" text-anchor="end" fill="#2a3480" textLength="9.50" lengthAdjust="spacingAndGlyphs">21</text>
<circle cx="740.47" cy="226.70" r="2.65" fill="#2a1a6c"/>
<text x="736.97" y="222.80" font-size="10.5" text-anchor="end" fill="#2a3480" textLength="9.50" lengthAdjust="spacingAndGlyphs">22</text>
<circle cx="764.09" cy="226.70" r="2.65" fill="#2a1a6c"/>
<text x="760.59" y="222.80" font-size="10.5" text-anchor="end" fill="#2a3480" textLength="9.50" lengthAdjust="spacingAndGlyphs">23</text>
<circle cx="787.71" cy="226.70" r="2.65" fill="#2a1a6c"/>
<text x="784.21" y="222.80" font-size="10.5" text-anchor="end" fill="#2a3480" textLength="9.50" lengthAdjust="spacingAndGlyphs">24</text>
<circle cx="811.33" cy="226.70" r="2.65" fill="#2a1a6c"/>
<text x="807.83" y="222.80" font-size="10.5" text-anchor="end" fill="#2a3480" textLength="9.50" lengthAdjust="spacingAndGlyphs">25</text>
<circle cx="834.95" cy="226.70" r="2.65" fill="#2a1a6c"/>
<text x="831.45" y="222.80" font-size="10.5" text-anchor="end" fill="#2a3480" textLength="9.50" lengthAdjust="spacingAndGlyphs">26</text>
<circle cx="858.57" cy="226.70" r="2.65" fill="#2a1a6c"/>
<text x="855.07" y="222.80" font-size="10.5" text-anchor="end" fill="#2a3480" textLength="9.50" lengthAdjust="spacingAndGlyphs">27</text>
<circle cx="882.19" cy="226.70" r="2.65" fill="#2a1a6c"/>
<text x="878.69" y="222.80" font-size="10.5" text-anchor="end" fill="#2a3480" textLength="9.50" lengthAdjust="spacingAndGlyphs">28</text>
<circle cx="905.81" cy="226.70" r="2.65" fill="#2a1a6c"/>
<text x="902.31" y="222.80" font-size="10.5" text-anchor="end" fill="#2a3480" textLength="9.50" lengthAdjust="spacingAndGlyphs">29</text>
<circle cx="929.43" cy="226.70" r="2.65" fill="#2a1a6c"/>
<text x="925.93" y="222.80" font-size="10.5" text-anchor="end" fill="#2a3480" textLength="9.50" lengthAdjust="spacingAndGlyphs">30</text>
<circle cx="953.05" cy="226.70" r="2.65" fill="#2a1a6c"/>
<text x="949.55" y="222.80" font-size="10.5" text-anchor="end" fill="#2a3480" textLength="9.50" lengthAdjust="spacingAndGlyphs">31</text>
<circle cx="433.41" cy="204.57" r="2.65" fill="#2a1a6c"/>
<text x="429.91" y="200.67" font-size="10.5" text-anchor="end" fill="#2a3480" textLength="9.50" lengthAdjust="spacingAndGlyphs">32</text>
<circle cx="457.03" cy="185.40" r="2.65" fill="#2a1a6c"/>
<text x="453.53" y="181.50" font-size="10.5" text-anchor="end" fill="#2a3480" textLength="9.50" lengthAdjust="spacingAndGlyphs">33</text>
<circle cx="480.65" cy="169.17" r="2.65" fill="#2a1a6c"/>
<text x="477.15" y="165.27" font-size="10.5" text-anchor="end" fill="#2a3480" textLength="9.50" lengthAdjust="spacingAndGlyphs">34</text>
<circle cx="504.27" cy="155.90" r="2.65" fill="#2a1a6c"/>
<text x="500.77" y="152.00" font-size="10.5" text-anchor="end" fill="#2a3480" textLength="9.50" lengthAdjust="spacingAndGlyphs">35</text>
<circle cx="527.89" cy="145.57" r="2.65" fill="#2a1a6c"/>
<text x="524.39" y="141.67" font-size="10.5" text-anchor="end" fill="#2a3480" textLength="9.50" lengthAdjust="spacingAndGlyphs">36</text>
<circle cx="551.51" cy="138.20" r="2.65" fill="#2a1a6c"/>
<text x="548.01" y="134.30" font-size="10.5" text-anchor="end" fill="#2a3480" textLength="9.50" lengthAdjust="spacingAndGlyphs">37</text>
<circle cx="575.13" cy="133.77" r="2.65" fill="#2a1a6c"/>
<text x="571.63" y="129.87" font-size="10.5" text-anchor="end" fill="#2a3480" textLength="9.50" lengthAdjust="spacingAndGlyphs">38</text>
<circle cx="598.75" cy="132.30" r="2.65" fill="#2a1a6c"/>
<text x="595.25" y="128.40" font-size="10.5" text-anchor="end" fill="#2a3480" textLength="9.50" lengthAdjust="spacingAndGlyphs">39</text>
<circle cx="622.37" cy="133.77" r="2.65" fill="#2a1a6c"/>
<text x="618.87" y="129.87" font-size="10.5" text-anchor="end" fill="#2a3480" textLength="9.50" lengthAdjust="spacingAndGlyphs">40</text>
<circle cx="645.99" cy="138.20" r="2.65" fill="#2a1a6c"/>
<text x="642.49" y="134.30" font-size="10.5" text-anchor="end" fill="#2a3480" textLength="9.50" lengthAdjust="spacingAndGlyphs">41</text>
<circle cx="669.61" cy="145.57" r="2.65" fill="#2a1a6c"/>
<text x="666.11" y="141.67" font-size="10.5" text-anchor="end" fill="#2a3480" textLength="9.50" lengthAdjust="spacingAndGlyphs">42</text>
<circle cx="693.23" cy="155.90" r="2.65" fill="#2a1a6c"/>
<text x="689.73" y="152.00" font-size="10.5" text-anchor="end" fill="#2a3480" textLength="9.50" lengthAdjust="spacingAndGlyphs">43</text>
<circle cx="716.85" cy="169.17" r="2.65" fill="#2a1a6c"/>
<text x="713.35" y="165.27" font-size="10.5" text-anchor="end" fill="#2a3480" textLength="9.50" lengthAdjust="spacingAndGlyphs">44</text>
<circle cx="740.47" cy="185.40" r="2.65" fill="#2a1a6c"/>
<text x="736.97" y="181.50" font-size="10.5" text-anchor="end" fill="#2a3480" textLength="9.50" lengthAdjust="spacingAndGlyphs">45</text>
<circle cx="764.09" cy="204.57" r="2.65" fill="#2a1a6c"/>
<text x="760.59" y="200.67" font-size="10.5" text-anchor="end" fill="#2a3480" textLength="9.50" lengthAdjust="spacingAndGlyphs">46</text>
<circle cx="315.31" cy="245.58" r="2.65" fill="#2a1a6c"/>
<text x="311.81" y="241.68" font-size="10.5" text-anchor="end" fill="#2a3480" textLength="9.50" lengthAdjust="spacingAndGlyphs">51</text>
<circle cx="338.93" cy="264.46" r="2.65" fill="#2a1a6c"/>
<text x="335.43" y="260.56" font-size="10.5" text-anchor="end" fill="#2a3480" textLength="9.50" lengthAdjust="spacingAndGlyphs">52</text>
<circle cx="362.55" cy="283.34" r="2.65" fill="#2a1a6c"/>
<text x="359.05" y="279.44" font-size="10.5" text-anchor="end" fill="#2a3480" textLength="9.50" lengthAdjust="spacingAndGlyphs">53</text>
<circle cx="386.17" cy="255.02" r="2.65" fill="#2a1a6c"/>
<text x="382.67" y="251.12" font-size="10.5" text-anchor="end" fill="#2a3480" textLength="9.50" lengthAdjust="spacingAndGlyphs">54</text>
<circle cx="362.55" cy="302.22" r="2.65" fill="#2a1a6c"/>
<text x="359.05" y="298.32" font-size="10.5" text-anchor="end" fill="#2a3480" textLength="9.50" lengthAdjust="spacingAndGlyphs">55</text>
<circle cx="362.55" cy="321.10" r="2.65" fill="#2a1a6c"/>
<text x="359.05" y="317.20" font-size="10.5" text-anchor="end" fill="#2a3480" textLength="9.50" lengthAdjust="spacingAndGlyphs">56</text>
<circle cx="811.33" cy="255.02" r="2.65" fill="#2a1a6c"/>
<text x="807.83" y="251.12" font-size="10.5" text-anchor="end" fill="#2a3480" textLength="9.50" lengthAdjust="spacingAndGlyphs">61</text>
<circle cx="834.95" cy="283.34" r="2.65" fill="#2a1a6c"/>
<text x="831.45" y="279.44" font-size="10.5" text-anchor="end" fill="#2a3480" textLength="9.50" lengthAdjust="spacingAndGlyphs">62</text>
<circle cx="858.57" cy="264.46" r="2.65" fill="#2a1a6c"/>
<text x="855.07" y="260.56" font-size="10.5" text-anchor="end" fill="#2a3480" textLength="9.50" lengthAdjust="spacingAndGlyphs">63</text>
<circle cx="882.19" cy="245.58" r="2.65" fill="#2a1a6c"/>
<text x="878.69" y="241.68" font-size="10.5" text-anchor="end" fill="#2a3480" textLength="9.50" lengthAdjust="spacingAndGlyphs">64</text>
<circle cx="834.95" cy="302.22" r="2.65" fill="#2a1a6c"/>
<text x="831.45" y="298.32" font-size="10.5" text-anchor="end" fill="#2a3480" textLength="9.50" lengthAdjust="spacingAndGlyphs">65</text>
<circle cx="834.95" cy="321.10" r="2.65" fill="#2a1a6c"/>
<text x="831.45" y="317.20" font-size="10.5" text-anchor="end" fill="#2a3480" textLength="9.50" lengthAdjust="spacingAndGlyphs">66</text>
</svg>
<!-- lower panel -->
<span class="t" id="t43" style="left:152.20px;top:472.50px;font-size:19.2px;line-height:23.81px;color:#000;font-weight:normal;transform:scaleX(1.2755);transform-origin:0 50%;-webkit-text-stroke:0.5px #000;">ｽｹﾙﾄﾝｼ<span style="margin-left:-0.06em;margin-right:-0.2em">ﾞ</span>ｪﾈﾚｰﾄ</span>
<div style="left:939.60px;top:473.00px;width:79.80px;height:21.20px;background:#c3c3c3;box-shadow:inset -0.8px -0.8px 0 #000,inset 0.8px 0.8px 0 #fff,inset -1.6px -1.6px 0 #808080,inset 1.6px 1.6px 0 #dfdfdf;"></div>
<svg style="left:944px;top:475px;" width="24" height="18" viewBox="944 475 24 18">
<rect x="950.4" y="478.6" width="11.4" height="10.6" fill="#fff" stroke="#000" stroke-width="0.9"/><rect x="950.4" y="478.6" width="11.4" height="2.4" fill="#1a1a8a"/><path d="M950.4 484 H961.8 M950.4 486.6 H961.8 M954.2 481 V489.2 M958 481 V489.2" stroke="#3030a0" stroke-width="0.7"/><path d="M958.4 487.2 L964.8 477.4 L966.8 478.8 L960.6 488.6 L958 489.8 Z" fill="#e8c020" stroke="#000" stroke-width="0.7"/><path d="M964.8 477.4 L966.8 478.8 L967.4 477.6 L965.6 476.4 Z" fill="#d02020"/>
</svg>
<span class="t" id="t44" style="left:971.20px;top:477.65px;font-size:9.6px;line-height:11.90px;color:#000;font-weight:normal;transform:scaleX(0.9798);transform-origin:0 50%;">結果貼付</span>
<div style="left:149.40px;top:498.40px;width:208.60px;height:14.20px;background:#fff;box-shadow:inset 0.8px 0.8px 0 #808080,inset -0.8px -0.8px 0 #fff,inset 1.6px 1.6px 0 #000,inset -1.6px -1.6px 0 #dfdfdf;"></div>
<div style="left:344.60px;top:500.00px;width:12.00px;height:11.00px;background:#c3c3c3;box-shadow:inset -0.8px -0.8px 0 #000,inset 0.8px 0.8px 0 #fff,inset -1.6px -1.6px 0 #808080,inset 1.6px 1.6px 0 #dfdfdf;"></div>
<svg style="left:344px;top:499px;" width="14" height="13" viewBox="344 499 14 13">
<path d="M347.8 504.2 H353.4 L350.6 507.2 Z" fill="#000"/>
</svg>
<span class="t" id="t45" style="left:152.00px;top:499.75px;font-size:9.6px;line-height:11.90px;color:#000;font-weight:normal;transform:scaleX(1.0901);transform-origin:0 50%;">(13)</span>
<span class="t" id="t46" style="left:176.00px;top:499.75px;font-size:9.6px;line-height:11.90px;color:#000;font-weight:normal;transform:scaleX(1.0007);transform-origin:0 50%;">部材挿入</span>
<span class="t" id="t47" style="left:224.80px;top:499.75px;font-size:9.6px;line-height:11.90px;color:#000;font-weight:normal;transform:scaleX(1.1228);transform-origin:0 50%;">:</span>
<div style="left:149.40px;top:513.80px;width:209.20px;height:285.10px;background:#000;"></div>
<svg style="left:149px;top:513px;" width="210" height="286" viewBox="149 513 210 286">
<path d="M214 578.2 H353.4 M214 633.2 H353.4" stroke="#e6e6e6" stroke-width="1"/>
<path d="M225.4 580.4 V631" stroke="#8c9ccc" stroke-width="0.9"/>
<path d="M263.8 580.4 V631" stroke="#8c9ccc" stroke-width="0.9"/>
<path d="M302.2 580.4 V631" stroke="#8c9ccc" stroke-width="0.9"/>
<path d="M340.6 580.4 V631" stroke="#8c9ccc" stroke-width="0.9"/>
<circle cx="225.4" cy="578.2" r="2.3" fill="#000" stroke="#fff" stroke-width="0.9"/>
<circle cx="225.4" cy="633.2" r="2.3" fill="#000" stroke="#fff" stroke-width="0.9"/>
<circle cx="263.8" cy="578.2" r="2.3" fill="#000" stroke="#fff" stroke-width="0.9"/>
<circle cx="263.8" cy="633.2" r="2.3" fill="#000" stroke="#fff" stroke-width="0.9"/>
<circle cx="302.2" cy="578.2" r="2.3" fill="#000" stroke="#fff" stroke-width="0.9"/>
<circle cx="302.2" cy="633.2" r="2.3" fill="#000" stroke="#fff" stroke-width="0.9"/>
<circle cx="340.6" cy="578.2" r="2.3" fill="#000" stroke="#fff" stroke-width="0.9"/>
<circle cx="340.6" cy="633.2" r="2.3" fill="#000" stroke="#fff" stroke-width="0.9"/>
<path d="M308 563.4 H327.6 M324.40000000000003 561.1999999999999 L327.6 563.4 L324.40000000000003 565.6" stroke="#e6e6e6" stroke-width="0.9" fill="none"/>
<path d="M306 647.2 H326.4 M323.2 645.0 L326.4 647.2 L323.2 649.4000000000001" stroke="#e6e6e6" stroke-width="0.9" fill="none"/>
<path d="M222 693.7 H345.6 M214 744.3 H346.8" stroke="#e6e6e6" stroke-width="1"/>
<path d="M285.6 694 L247.2 744.4 M285.6 694 V744.4 M285.6 694 L324 744.4" stroke="#8c9ccc" stroke-width="0.9" fill="none"/>
<circle cx="247.2" cy="694" r="2.3" fill="#000" stroke="#fff" stroke-width="0.9"/>
<circle cx="247.2" cy="744.4" r="2.3" fill="#000" stroke="#fff" stroke-width="0.9"/>
<circle cx="285.6" cy="694" r="2.3" fill="#000" stroke="#fff" stroke-width="0.9"/>
<circle cx="285.6" cy="744.4" r="2.3" fill="#000" stroke="#fff" stroke-width="0.9"/>
<circle cx="324" cy="694" r="2.3" fill="#000" stroke="#fff" stroke-width="0.9"/>
<circle cx="324" cy="744.4" r="2.3" fill="#000" stroke="#fff" stroke-width="0.9"/>
<path d="M307 757.2 H326.6 M323.40000000000003 755.0 L326.6 757.2 L323.40000000000003 759.4000000000001" stroke="#e6e6e6" stroke-width="0.9" fill="none"/>
</svg>
<span class="t" id="t48" style="left:158.40px;top:545.05px;font-size:9.6px;line-height:11.90px;color:#f0f0f0;font-weight:normal;transform:scaleX(1.0660);transform-origin:0 50%;letter-spacing:1px;">(例1)</span>
<span class="t" id="t49" style="left:239.00px;top:557.45px;font-size:9.6px;line-height:11.90px;color:#f0f0f0;font-weight:normal;transform:scaleX(1.2506);transform-origin:0 50%;">i端側増分Di</span>
<span class="t" id="t50" style="left:157.60px;top:570.05px;font-size:9.6px;line-height:11.90px;color:#f0f0f0;font-weight:normal;transform:scaleX(1.0801);transform-origin:0 50%;">i端格点</span>
<span class="t" id="t51" style="left:159.40px;top:581.45px;font-size:9.6px;line-height:11.90px;color:#f0f0f0;font-weight:normal;transform:scaleX(1.0751);transform-origin:0 50%;">開始番号Ni</span>
<span class="t" id="t52" style="left:160.80px;top:601.45px;font-size:9.6px;line-height:11.90px;color:#f0f0f0;font-weight:normal;transform:scaleX(1.1351);transform-origin:0 50%;">挿入部材---&gt;</span>
<span class="t" id="t53" style="left:157.60px;top:626.25px;font-size:9.6px;line-height:11.90px;color:#f0f0f0;font-weight:normal;transform:scaleX(1.1448);transform-origin:0 50%;">j端格点</span>
<span class="t" id="t54" style="left:160.40px;top:637.45px;font-size:9.6px;line-height:11.90px;color:#f0f0f0;font-weight:normal;transform:scaleX(1.0835);transform-origin:0 50%;">開始番号Nj</span>
<span class="t" id="t55" style="left:237.60px;top:641.45px;font-size:9.6px;line-height:11.90px;color:#f0f0f0;font-weight:normal;transform:scaleX(1.2667);transform-origin:0 50%;">j端側増分Dj</span>
<span class="t" id="t56" style="left:158.40px;top:661.45px;font-size:9.6px;line-height:11.90px;color:#f0f0f0;font-weight:normal;transform:scaleX(1.1055);transform-origin:0 50%;letter-spacing:1px;">(例2)</span>
<span class="t" id="t57" style="left:240.00px;top:675.65px;font-size:9.6px;line-height:11.90px;color:#f0f0f0;font-weight:normal;transform:scaleX(1.2937);transform-origin:0 50%;">i端側増分(増分0)</span>
<span class="t" id="t58" style="left:157.60px;top:681.45px;font-size:9.6px;line-height:11.90px;color:#f0f0f0;font-weight:normal;transform:scaleX(1.0801);transform-origin:0 50%;">i端格点</span>
<span class="t" id="t59" style="left:159.80px;top:692.45px;font-size:9.6px;line-height:11.90px;color:#f0f0f0;font-weight:normal;transform:scaleX(1.0835);transform-origin:0 50%;">開始番号Ni</span>
<span class="t" id="t60" style="left:161.00px;top:712.65px;font-size:9.6px;line-height:11.90px;color:#f0f0f0;font-weight:normal;transform:scaleX(1.1389);transform-origin:0 50%;">挿入部材---&gt;</span>
<span class="t" id="t61" style="left:158.00px;top:737.45px;font-size:9.6px;line-height:11.90px;color:#f0f0f0;font-weight:normal;transform:scaleX(1.1513);transform-origin:0 50%;">j端格点</span>
<span class="t" id="t62" style="left:161.00px;top:748.85px;font-size:9.6px;line-height:11.90px;color:#f0f0f0;font-weight:normal;transform:scaleX(1.0751);transform-origin:0 50%;">開始番号Nj</span>
<span class="t" id="t63" style="left:238.60px;top:751.45px;font-size:9.6px;line-height:11.90px;color:#f0f0f0;font-weight:normal;transform:scaleX(1.2667);transform-origin:0 50%;">j端側増分Dj</span>
<div style="left:366.20px;top:497.40px;width:199.80px;height:302.00px;background:#fff;box-shadow:inset 0.8px 0.8px 0 #808080,inset -0.8px -0.8px 0 #fff,inset 1.6px 1.6px 0 #000,inset -1.6px -1.6px 0 #dfdfdf;"></div>
<div style="left:367.60px;top:498.60px;width:116.20px;height:15.19px;background:#c3c3c3;box-shadow:inset 0.8px 0.8px 0 #f4f4f4,inset -1.2px -1.2px 0 #404040;"></div>
<div style="left:483.80px;top:498.60px;width:68.00px;height:15.19px;border-right:0.8px solid #c8c8c8;border-bottom:0.8px solid #c8c8c8;"></div>
<span class="t" id="t64" style="left:377.60px;top:500.44px;font-size:9.6px;line-height:11.90px;color:#000;font-weight:normal;transform:scaleX(0.9937);transform-origin:0 50%;">挿入数</span>
<span class="t" id="t65" style="right:483.20px;top:499.60px;font-size:10.8px;line-height:13.39px;color:#000;font-weight:normal;transform:scaleX(0.6991);transform-origin:100% 50%;">15</span>
<div style="left:367.60px;top:513.79px;width:116.20px;height:15.19px;background:#c3c3c3;box-shadow:inset 0.8px 0.8px 0 #f4f4f4,inset -1.2px -1.2px 0 #404040;"></div>
<div style="left:483.80px;top:513.79px;width:68.00px;height:15.19px;border-right:0.8px solid #c8c8c8;border-bottom:0.8px solid #c8c8c8;"></div>
<span class="t" id="t66" style="left:377.60px;top:515.63px;font-size:9.6px;line-height:11.90px;color:#000;font-weight:normal;transform:scaleX(0.9902);transform-origin:0 50%;">断面番号</span>
<span class="t" id="t67" style="right:483.20px;top:514.79px;font-size:10.8px;line-height:13.39px;color:#000;font-weight:normal;transform:scaleX(0.6151);transform-origin:100% 50%;">1</span>
<div style="left:367.60px;top:528.98px;width:116.20px;height:15.19px;background:#c3c3c3;box-shadow:inset 0.8px 0.8px 0 #f4f4f4,inset -1.2px -1.2px 0 #404040;"></div>
<div style="left:483.80px;top:528.98px;width:68.00px;height:15.19px;border-right:0.8px solid #c8c8c8;border-bottom:0.8px solid #c8c8c8;"></div>
<span class="t" id="t68" style="left:377.60px;top:530.82px;font-size:9.6px;line-height:11.90px;color:#000;font-weight:normal;transform:scaleX(0.9902);transform-origin:0 50%;">材質番号</span>
<span class="t" id="t69" style="right:483.20px;top:529.98px;font-size:10.8px;line-height:13.39px;color:#000;font-weight:normal;transform:scaleX(0.6151);transform-origin:100% 50%;">1</span>
<div style="left:367.60px;top:544.17px;width:116.20px;height:15.19px;background:#c3c3c3;box-shadow:inset 0.8px 0.8px 0 #f4f4f4,inset -1.2px -1.2px 0 #404040;"></div>
<div style="left:483.80px;top:544.17px;width:68.00px;height:15.19px;border-right:0.8px solid #c8c8c8;border-bottom:0.8px solid #c8c8c8;"></div>
<span class="t" id="t70" style="left:380.40px;top:546.01px;font-size:9.6px;line-height:11.90px;color:#000;font-weight:normal;transform:scaleX(1.0332);transform-origin:0 50%;">i端格点開始番号</span>
<span class="t" id="t71" style="left:463.60px;top:546.01px;font-size:9.6px;line-height:11.90px;color:#000;font-weight:normal;transform:scaleX(0.9490);transform-origin:0 50%;">Ni</span>
<span class="t" id="t72" style="right:483.20px;top:545.17px;font-size:10.8px;line-height:13.39px;color:#000;font-weight:normal;transform:scaleX(0.6151);transform-origin:100% 50%;">9</span>
<div style="left:367.60px;top:559.36px;width:116.20px;height:15.19px;background:#c3c3c3;box-shadow:inset 0.8px 0.8px 0 #f4f4f4,inset -1.2px -1.2px 0 #404040;"></div>
<div style="left:483.80px;top:559.36px;width:68.00px;height:15.19px;border-right:0.8px solid #c8c8c8;border-bottom:0.8px solid #c8c8c8;"></div>
<span class="t" id="t73" style="left:380.40px;top:561.20px;font-size:9.6px;line-height:11.90px;color:#000;font-weight:normal;transform:scaleX(1.0497);transform-origin:0 50%;">i端格点増分</span>
<span class="t" id="t74" style="left:463.60px;top:561.20px;font-size:9.6px;line-height:11.90px;color:#000;font-weight:normal;transform:scaleX(0.9490);transform-origin:0 50%;">Di</span>
<span class="t" id="t75" style="right:483.20px;top:560.36px;font-size:10.8px;line-height:13.39px;color:#000;font-weight:normal;transform:scaleX(0.6151);transform-origin:100% 50%;">1</span>
<div style="left:367.60px;top:574.55px;width:116.20px;height:15.19px;background:#c3c3c3;box-shadow:inset 0.8px 0.8px 0 #f4f4f4,inset -1.2px -1.2px 0 #404040;"></div>
<div style="left:483.80px;top:574.55px;width:68.00px;height:15.19px;border-right:0.8px solid #c8c8c8;border-bottom:0.8px solid #c8c8c8;"></div>
<span class="t" id="t76" style="left:380.40px;top:576.39px;font-size:9.6px;line-height:11.90px;color:#000;font-weight:normal;transform:scaleX(1.0332);transform-origin:0 50%;">j端格点開始番号</span>
<span class="t" id="t77" style="left:463.60px;top:576.39px;font-size:9.6px;line-height:11.90px;color:#000;font-weight:normal;transform:scaleX(0.9490);transform-origin:0 50%;">Nj</span>
<span class="t" id="t78" style="right:483.20px;top:575.55px;font-size:10.8px;line-height:13.39px;color:#000;font-weight:normal;transform:scaleX(0.6991);transform-origin:100% 50%;">32</span>
<div style="left:367.60px;top:589.74px;width:116.20px;height:15.19px;background:#c3c3c3;box-shadow:inset 0.8px 0.8px 0 #f4f4f4,inset -1.2px -1.2px 0 #404040;"></div>
<div style="left:483.80px;top:589.74px;width:68.00px;height:15.19px;border-right:0.8px solid #c8c8c8;border-bottom:0.8px solid #c8c8c8;"></div>
<span class="t" id="t79" style="left:380.40px;top:591.58px;font-size:9.6px;line-height:11.90px;color:#000;font-weight:normal;transform:scaleX(1.0497);transform-origin:0 50%;">j端格点増分</span>
<span class="t" id="t80" style="left:463.60px;top:591.58px;font-size:9.6px;line-height:11.90px;color:#000;font-weight:normal;transform:scaleX(0.9490);transform-origin:0 50%;">Dj</span>
<span class="t" id="t81" style="right:483.20px;top:590.74px;font-size:10.8px;line-height:13.39px;color:#000;font-weight:normal;transform:scaleX(0.6151);transform-origin:100% 50%;">1</span>
<div style="left:483.60px;top:513.80px;width:68.20px;height:15.00px;border:1px dashed #303030;"></div>
<div style="left:571.40px;top:497.40px;width:450.00px;height:303.40px;background:#000;box-shadow:inset 0.8px 0.8px 0 #808080,inset -0.8px -0.8px 0 #fff;"></div>
<div style="left:572.60px;top:498.40px;width:447.60px;height:301.00px;background:#000;"></div>
<svg style="left:572px;top:498px;" width="449" height="302" viewBox="572 498 449 302">
<path d="M710.19 637.45V649.10M722.62 627.35V649.10M735.05 618.80V649.10M747.48 611.81V649.10M759.91 606.37V649.10M772.34 602.49V649.10M784.77 600.16V649.10M797.20 599.38V649.10M809.63 600.16V649.10M822.06 602.49V649.10M834.49 606.37V649.10M846.92 611.81V649.10M859.35 618.80V649.10M871.78 627.35V649.10M884.21 637.45V649.10" stroke="#e0e0e0" stroke-width="0.9"/>
<path d="M610.75 649.10L623.18 649.10M623.18 649.10L635.61 649.10M635.61 649.10L648.04 649.10M648.04 649.10L660.47 649.10M660.47 649.10L672.90 649.10M672.90 649.10L685.33 649.10M685.33 649.10L697.76 649.10M697.76 649.10L710.19 649.10M710.19 649.10L722.62 649.10M722.62 649.10L735.05 649.10M735.05 649.10L747.48 649.10M747.48 649.10L759.91 649.10M759.91 649.10L772.34 649.10M772.34 649.10L784.77 649.10M784.77 649.10L797.20 649.10M797.20 649.10L809.63 649.10M809.63 649.10L822.06 649.10M822.06 649.10L834.49 649.10M834.49 649.10L846.92 649.10M846.92 649.10L859.35 649.10M859.35 649.10L871.78 649.10M871.78 649.10L884.21 649.10M884.21 649.10L896.64 649.10M896.64 649.10L909.07 649.10M909.07 649.10L921.50 649.10M921.50 649.10L933.93 649.10M933.93 649.10L946.36 649.10M946.36 649.10L958.79 649.10M958.79 649.10L971.22 649.10M971.22 649.10L983.65 649.10M697.76 649.10L710.19 637.45M710.19 637.45L722.62 627.35M722.62 627.35L735.05 618.80M735.05 618.80L747.48 611.81M747.48 611.81L759.91 606.37M759.91 606.37L772.34 602.49M772.34 602.49L784.77 600.16M784.77 600.16L797.20 599.38M797.20 599.38L809.63 600.16M809.63 600.16L822.06 602.49M822.06 602.49L834.49 606.37M834.49 606.37L846.92 611.81M846.92 611.81L859.35 618.80M859.35 618.80L871.78 627.35M871.78 627.35L884.21 637.45M884.21 637.45L896.64 649.10M635.61 649.10L648.04 659.04M648.04 659.04L660.47 668.99M660.47 668.99L672.90 678.93M672.90 678.93L685.33 664.02M685.33 664.02L697.76 649.10M672.90 678.93L672.90 688.88M672.90 688.88L672.90 698.82M896.64 649.10L909.07 664.02M909.07 664.02L921.50 678.93M921.50 678.93L933.93 668.99M933.93 668.99L946.36 659.04M946.36 659.04L958.79 649.10M921.50 678.93L921.50 688.88M921.50 688.88L921.50 698.82" stroke="#0e7074" stroke-width="1.05" fill="none"/>
<path d="M610.75 649.10H983.65" stroke="#0e7074" stroke-width="1.5" fill="none"/>
<circle cx="610.75" cy="649.10" r="0.95" fill="#5078b0"/>
<circle cx="623.18" cy="649.10" r="0.95" fill="#5078b0"/>
<circle cx="635.61" cy="649.10" r="0.95" fill="#5078b0"/>
<circle cx="648.04" cy="649.10" r="0.95" fill="#5078b0"/>
<circle cx="660.47" cy="649.10" r="0.95" fill="#5078b0"/>
<circle cx="672.90" cy="649.10" r="0.95" fill="#5078b0"/>
<circle cx="685.33" cy="649.10" r="0.95" fill="#5078b0"/>
<circle cx="697.76" cy="649.10" r="0.95" fill="#5078b0"/>
<circle cx="710.19" cy="649.10" r="0.95" fill="#5078b0"/>
<circle cx="722.62" cy="649.10" r="0.95" fill="#5078b0"/>
<circle cx="735.05" cy="649.10" r="0.95" fill="#5078b0"/>
<circle cx="747.48" cy="649.10" r="0.95" fill="#5078b0"/>
<circle cx="759.91" cy="649.10" r="0.95" fill="#5078b0"/>
<circle cx="772.34" cy="649.10" r="0.95" fill="#5078b0"/>
<circle cx="784.77" cy="649.10" r="0.95" fill="#5078b0"/>
<circle cx="797.20" cy="649.10" r="0.95" fill="#5078b0"/>
<circle cx="809.63" cy="649.10" r="0.95" fill="#5078b0"/>
<circle cx="822.06" cy="649.10" r="0.95" fill="#5078b0"/>
<circle cx="834.49" cy="649.10" r="0.95" fill="#5078b0"/>
<circle cx="846.92" cy="649.10" r="0.95" fill="#5078b0"/>
<circle cx="859.35" cy="649.10" r="0.95" fill="#5078b0"/>
<circle cx="871.78" cy="649.10" r="0.95" fill="#5078b0"/>
<circle cx="884.21" cy="649.10" r="0.95" fill="#5078b0"/>
<circle cx="896.64" cy="649.10" r="0.95" fill="#5078b0"/>
<circle cx="909.07" cy="649.10" r="0.95" fill="#5078b0"/>
<circle cx="921.50" cy="649.10" r="0.95" fill="#5078b0"/>
<circle cx="933.93" cy="649.10" r="0.95" fill="#5078b0"/>
<circle cx="946.36" cy="649.10" r="0.95" fill="#5078b0"/>
<circle cx="958.79" cy="649.10" r="0.95" fill="#5078b0"/>
<circle cx="971.22" cy="649.10" r="0.95" fill="#5078b0"/>
<circle cx="983.65" cy="649.10" r="0.95" fill="#5078b0"/>
<circle cx="710.19" cy="637.45" r="0.95" fill="#5078b0"/>
<circle cx="722.62" cy="627.35" r="0.95" fill="#5078b0"/>
<circle cx="735.05" cy="618.80" r="0.95" fill="#5078b0"/>
<circle cx="747.48" cy="611.81" r="0.95" fill="#5078b0"/>
<circle cx="759.91" cy="606.37" r="0.95" fill="#5078b0"/>
<circle cx="772.34" cy="602.49" r="0.95" fill="#5078b0"/>
<circle cx="784.77" cy="600.16" r="0.95" fill="#5078b0"/>
<circle cx="797.20" cy="599.38" r="0.95" fill="#5078b0"/>
<circle cx="809.63" cy="600.16" r="0.95" fill="#5078b0"/>
<circle cx="822.06" cy="602.49" r="0.95" fill="#5078b0"/>
<circle cx="834.49" cy="606.37" r="0.95" fill="#5078b0"/>
<circle cx="846.92" cy="611.81" r="0.95" fill="#5078b0"/>
<circle cx="859.35" cy="618.80" r="0.95" fill="#5078b0"/>
<circle cx="871.78" cy="627.35" r="0.95" fill="#5078b0"/>
<circle cx="884.21" cy="637.45" r="0.95" fill="#5078b0"/>
<circle cx="648.04" cy="659.04" r="0.95" fill="#5078b0"/>
<circle cx="660.47" cy="668.99" r="0.95" fill="#5078b0"/>
<circle cx="672.90" cy="678.93" r="0.95" fill="#5078b0"/>
<circle cx="685.33" cy="664.02" r="0.95" fill="#5078b0"/>
<circle cx="672.90" cy="688.88" r="0.95" fill="#5078b0"/>
<circle cx="672.90" cy="698.82" r="0.95" fill="#5078b0"/>
<circle cx="909.07" cy="664.02" r="0.95" fill="#5078b0"/>
<circle cx="921.50" cy="678.93" r="0.95" fill="#5078b0"/>
<circle cx="933.93" cy="668.99" r="0.95" fill="#5078b0"/>
<circle cx="946.36" cy="659.04" r="0.95" fill="#5078b0"/>
<circle cx="921.50" cy="688.88" r="0.95" fill="#5078b0"/>
<circle cx="921.50" cy="698.82" r="0.95" fill="#5078b0"/>
</svg>
<!-- status bar -->
<div style="left:0.40px;top:804.40px;width:54.40px;height:14.00px;box-shadow:inset 0.8px 0.8px 0 #808080,inset -0.8px -0.8px 0 #fff;"></div>
<div style="left:56.60px;top:804.40px;width:55.60px;height:14.00px;box-shadow:inset 0.8px 0.8px 0 #808080,inset -0.8px -0.8px 0 #fff;"></div>
<div style="left:113.80px;top:804.40px;width:769.40px;height:14.00px;box-shadow:inset 0.8px 0.8px 0 #808080,inset -0.8px -0.8px 0 #fff;"></div>
<div style="left:883.60px;top:804.40px;width:34.40px;height:14.00px;box-shadow:inset 0.8px 0.8px 0 #808080,inset -0.8px -0.8px 0 #fff;"></div>
<div style="left:921.00px;top:804.40px;width:28.20px;height:14.00px;box-shadow:inset 0.8px 0.8px 0 #808080,inset -0.8px -0.8px 0 #fff;"></div>
<div style="left:952.40px;top:804.40px;width:69.60px;height:14.00px;box-shadow:inset 0.8px 0.8px 0 #808080,inset -0.8px -0.8px 0 #fff;"></div>
<span class="t" id="t82" style="left:8.60px;top:805.85px;font-size:9.6px;line-height:11.90px;color:#000;font-weight:normal;transform:scaleX(1.0007);transform-origin:0 50%;">従来単位</span>
<span class="t" id="t83" style="left:887.60px;top:806.34px;font-size:8.8px;line-height:10.91px;color:#8a8a8a;font-weight:normal;transform:scaleX(1.0597);transform-origin:0 50%;">CAPS</span>
<span class="t" id="t84" style="left:925.00px;top:806.34px;font-size:8.8px;line-height:10.91px;color:#000;font-weight:normal;transform:scaleX(1.0276);transform-origin:0 50%;">NUM</span>
<span class="t" id="t85" style="left:972.00px;top:805.85px;font-size:9.6px;line-height:11.90px;color:#000;font-weight:normal;transform:scaleX(0.9095);transform-origin:0 50%;">午後 8:06:49</span>
</div></body></html>
